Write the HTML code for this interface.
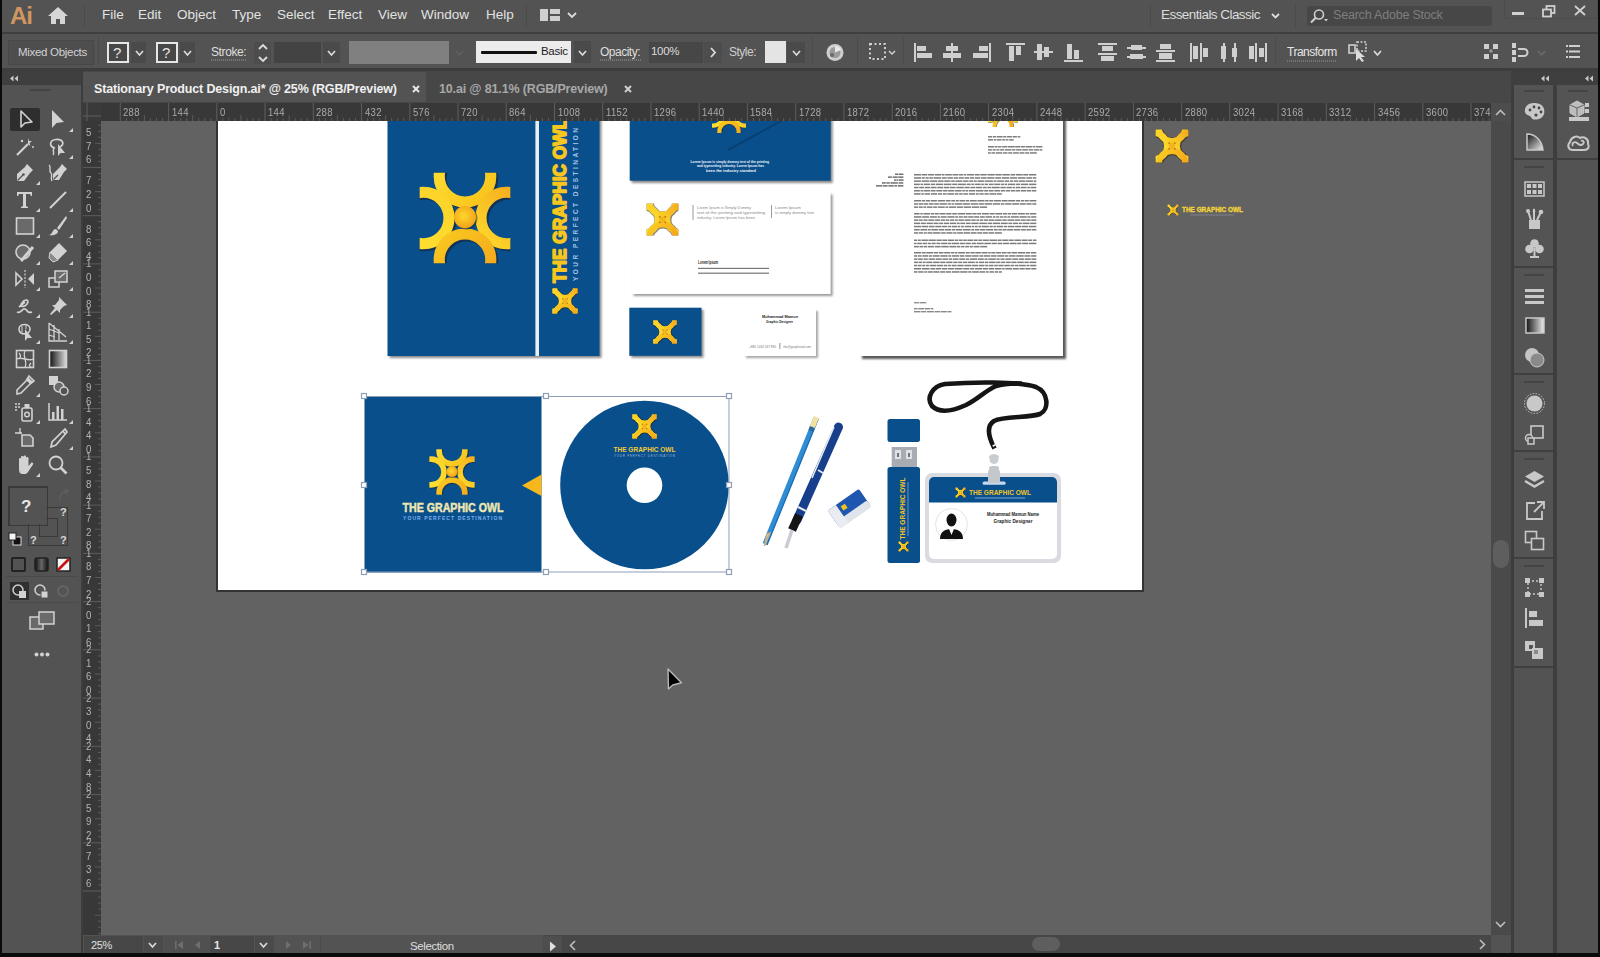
<!DOCTYPE html><html><head><meta charset="utf-8"><style>
*{margin:0;padding:0;box-sizing:border-box}
html,body{width:1600px;height:957px;overflow:hidden;background:#0b0b0b;font-family:"Liberation Sans",sans-serif}
.a{position:absolute}
.t{position:absolute;white-space:nowrap;line-height:1}
svg{position:absolute;overflow:visible}
</style></head><body><div class="a" style="left:2px;top:0px;width:1596px;height:32px;background:#535353;"></div>
<div class="a" style="left:2px;top:32px;width:1596px;height:2px;background:#3f3f3f;"></div>
<div class="a" style="left:2px;top:34px;width:1596px;height:35px;background:#535353;"></div>
<div class="a" style="left:2px;top:68px;width:1596px;height:3px;background:#3d3d3d;"></div>
<div class="a" style="left:2px;top:71px;width:1596px;height:32px;background:#474747;"></div>
<div class="a" style="left:2px;top:71px;width:79px;height:14px;background:#3f3f3f;"></div>
<div class="a" style="left:2px;top:85px;width:79px;height:868px;background:#535353;"></div>
<div class="a" style="left:81px;top:71px;width:2px;height:882px;background:#3d3d3d;"></div>
<div class="a" style="left:1511px;top:71px;width:87px;height:14px;background:#3f3f3f;"></div>
<div class="a" style="left:1511px;top:85px;width:3px;height:868px;background:#3d3d3d;"></div>
<div class="a" style="left:1514px;top:85px;width:39px;height:868px;background:#535353;"></div>
<div class="a" style="left:1553px;top:85px;width:4px;height:868px;background:#3e3e3e;"></div>
<div class="a" style="left:1557px;top:85px;width:41px;height:868px;background:#535353;"></div>
<div class="a" style="left:83px;top:72px;width:343px;height:30px;background:#535353;"></div>
<div class="a" style="left:83px;top:103px;width:1408px;height:18px;background:#383838;"></div>
<div class="a" style="left:83px;top:121px;width:18px;height:814px;background:#383838;"></div>
<div class="a" style="left:101px;top:121px;width:1390px;height:814px;background:#626262;"></div>
<div class="a" style="left:1491px;top:103px;width:20px;height:832px;background:#4a4a4a;"></div>
<div class="a" style="left:83px;top:935px;width:1428px;height:18px;background:#535353;"></div>
<div class="a" style="left:543px;top:935px;width:948px;height:18px;background:#474747;"></div>
<div class="a" style="left:216px;top:121px;width:928px;height:471px;background:#343434;"></div>
<div class="a" style="left:218px;top:121px;width:924px;height:469px;background:#ffffff;"></div>
<div class="t" style="left:10px;top:4px;font-size:24px;color:#cf9660;font-weight:bold;letter-spacing:-1px">Ai</div>
<svg style="left:48px;top:7px;" width="20" height="17" viewBox="0 0 20 17"><path d="M10 0 L20 9 L17 9 L17 17 L12 17 L12 12 L8 12 L8 17 L3 17 L3 9 L0 9 Z" fill="#d6d6d6"/></svg>
<div class="a" style="left:84px;top:5px;width:1px;height:22px;background:#4a4a4a;"></div>
<div class="t" style="left:102px;top:8px;font-size:13.5px;color:#e2e2e2;">File</div>
<div class="t" style="left:138px;top:8px;font-size:13.5px;color:#e2e2e2;">Edit</div>
<div class="t" style="left:177px;top:8px;font-size:13.5px;color:#e2e2e2;">Object</div>
<div class="t" style="left:232px;top:8px;font-size:13.5px;color:#e2e2e2;">Type</div>
<div class="t" style="left:277px;top:8px;font-size:13.5px;color:#e2e2e2;">Select</div>
<div class="t" style="left:328px;top:8px;font-size:13.5px;color:#e2e2e2;">Effect</div>
<div class="t" style="left:378px;top:8px;font-size:13.5px;color:#e2e2e2;">View</div>
<div class="t" style="left:421px;top:8px;font-size:13.5px;color:#e2e2e2;">Window</div>
<div class="t" style="left:486px;top:8px;font-size:13.5px;color:#e2e2e2;">Help</div>
<div class="a" style="left:526px;top:5px;width:1px;height:22px;background:#4a4a4a;"></div>
<svg style="left:540px;top:9px;" width="20" height="12" viewBox="0 0 20 12"><rect x="0" y="0" width="8" height="12" fill="#cfcfcf"/><rect x="10" y="0" width="10" height="5" fill="#cfcfcf"/><rect x="10" y="7" width="10" height="5" fill="#cfcfcf"/></svg>
<svg style="left:567px;top:12px;" width="10" height="6" viewBox="0 0 10 6"><path d="M1 1 L5 5 L9 1" stroke="#dcdcdc" stroke-width="1.8" fill="none"/></svg>
<div class="a" style="left:1150px;top:5px;width:1px;height:22px;background:#4a4a4a;"></div>
<div class="t" style="left:1161px;top:8px;font-size:13.5px;color:#dcdcdc;letter-spacing:-0.55px">Essentials Classic</div>
<svg style="left:1271px;top:13px;" width="9" height="6" viewBox="0 0 9 6"><path d="M1 1 L4.5 4.5 L8 1" stroke="#dcdcdc" stroke-width="1.8" fill="none"/></svg>
<div class="a" style="left:1295px;top:5px;width:1px;height:22px;background:#4a4a4a;"></div>
<div class="a" style="left:1307px;top:6px;width:185px;height:20px;background:#474747;border-radius:3px"></div>
<svg style="left:1310px;top:9px;" width="18" height="14" viewBox="0 0 18 14"><circle cx="9" cy="5.5" r="4.5" stroke="#cfcfcf" stroke-width="1.6" fill="none"/><path d="M5.8 8.8 L1 13.5" stroke="#cfcfcf" stroke-width="2"/><path d="M14 10 L18 10 L16 12.5 Z" fill="#cfcfcf"/></svg>
<div class="t" style="left:1333px;top:9px;font-size:12.5px;color:#7e7e7e;letter-spacing:-0.2px">Search Adobe Stock</div>
<div class="a" style="left:1504px;top:-1px;width:94px;height:20px;background:transparent;border:1px solid #4c4c4c"></div>
<div class="a" style="left:1512px;top:12px;width:12px;height:3px;background:#d0d0d0;"></div>
<svg style="left:1542px;top:5px;" width="14" height="12" viewBox="0 0 14 12"><rect x="4.5" y="1" width="8" height="7" stroke="#d0d0d0" stroke-width="1.8" fill="none"/><rect x="1" y="4.5" width="8" height="7" stroke="#d0d0d0" stroke-width="1.8" fill="#535353"/></svg>
<svg style="left:1574px;top:5px;" width="12" height="11" viewBox="0 0 12 11"><path d="M1 1 L11 10 M11 1 L1 10" stroke="#d0d0d0" stroke-width="1.8"/></svg>
<div class="a" style="left:8px;top:40px;width:86px;height:25px;background:#4e4e4e;border:1px solid #484848"></div>
<div class="t" style="left:18px;top:47px;font-size:11.5px;color:#d2d2d2;letter-spacing:-0.3px">Mixed Objects</div>
<div class="a" style="left:98px;top:37px;width:1px;height:28px;background:#4a4a4a;"></div>
<div class="a" style="left:107px;top:42px;width:22px;height:21px;background:#474747;border:2px solid #e6e6e6"></div>
<div class="t" style="left:113px;top:45px;font-size:15px;color:#e6e6e6;">?</div>
<div class="a" style="left:131px;top:42px;width:15px;height:21px;background:#4a4a4a;"></div>
<svg style="left:135px;top:50px;" width="9" height="6" viewBox="0 0 9 6"><path d="M1 1 L4.5 5 L8 1" stroke="#d8d8d8" stroke-width="1.8" fill="none"/></svg>
<div class="a" style="left:156px;top:42px;width:22px;height:21px;background:#474747;border:2px solid #e6e6e6"></div>
<div class="t" style="left:162px;top:45px;font-size:15px;color:#e6e6e6;">?</div>
<div class="a" style="left:180px;top:42px;width:15px;height:21px;background:#4a4a4a;"></div>
<svg style="left:183px;top:50px;" width="9" height="6" viewBox="0 0 9 6"><path d="M1 1 L4.5 5 L8 1" stroke="#d8d8d8" stroke-width="1.8" fill="none"/></svg>
<div class="t" style="left:211px;top:46px;font-size:12px;color:#dedede;letter-spacing:-0.4px">Stroke:</div>
<svg style="left:211px;top:59px;" width="35" height="2" viewBox="0 0 35 2"><path d="M0 1 H35" stroke="#9a9a9a" stroke-width="1" stroke-dasharray="1 1"/></svg>
<div class="a" style="left:254px;top:42px;width:17px;height:22px;background:#4d4d4d;"></div>
<svg style="left:258px;top:43px;" width="10" height="20" viewBox="0 0 10 20"><path d="M1 6 L5 2 L9 6 M1 14 L5 18 L9 14" stroke="#dcdcdc" stroke-width="1.8" fill="none"/></svg>
<div class="a" style="left:274px;top:42px;width:47px;height:21px;background:#434343;"></div>
<div class="a" style="left:323px;top:42px;width:17px;height:21px;background:#4a4a4a;"></div>
<svg style="left:327px;top:50px;" width="9" height="6" viewBox="0 0 9 6"><path d="M1 1 L4.5 5 L8 1" stroke="#d8d8d8" stroke-width="1.8" fill="none"/></svg>
<div class="a" style="left:349px;top:41px;width:100px;height:23px;background:#808080;"></div>
<svg style="left:455px;top:50px;" width="9" height="6" viewBox="0 0 9 6"><path d="M1 1 L4.5 5 L8 1" stroke="#606060" stroke-width="1.8" fill="none"/></svg>
<div class="a" style="left:476px;top:41px;width:95px;height:22px;background:#ececec;"></div>
<div class="a" style="left:481px;top:51px;width:56px;height:3px;background:#111111;border-radius:1px"></div>
<div class="t" style="left:541px;top:46px;font-size:11.5px;color:#222;letter-spacing:-0.3px">Basic</div>
<div class="a" style="left:574px;top:41px;width:17px;height:22px;background:#4a4a4a;"></div>
<svg style="left:578px;top:50px;" width="9" height="6" viewBox="0 0 9 6"><path d="M1 1 L4.5 5 L8 1" stroke="#d8d8d8" stroke-width="1.8" fill="none"/></svg>
<div class="t" style="left:600px;top:46px;font-size:12px;color:#dedede;letter-spacing:-0.5px">Opacity:</div>
<svg style="left:600px;top:59px;" width="41" height="2" viewBox="0 0 41 2"><path d="M0 1 H41" stroke="#9a9a9a" stroke-width="1" stroke-dasharray="1 1"/></svg>
<div class="a" style="left:649px;top:42px;width:54px;height:21px;background:#474747;"></div>
<div class="t" style="left:651px;top:46px;font-size:11.5px;color:#dcdcdc;letter-spacing:-0.3px">100%</div>
<div class="a" style="left:704px;top:42px;width:18px;height:21px;background:#4d4d4d;"></div>
<svg style="left:710px;top:47px;" width="6" height="11" viewBox="0 0 6 11"><path d="M1 1 L5 5.5 L1 10" stroke="#dcdcdc" stroke-width="1.8" fill="none"/></svg>
<div class="t" style="left:729px;top:46px;font-size:12px;color:#cfcfcf;letter-spacing:-0.5px">Style:</div>
<div class="a" style="left:765px;top:41px;width:21px;height:22px;background:#e4e4e4;"></div>
<div class="a" style="left:787px;top:42px;width:18px;height:21px;background:#4a4a4a;"></div>
<svg style="left:792px;top:50px;" width="9" height="6" viewBox="0 0 9 6"><path d="M1 1 L4.5 5 L8 1" stroke="#d8d8d8" stroke-width="1.8" fill="none"/></svg>
<div class="a" style="left:812px;top:37px;width:1px;height:28px;background:#4b4b4b;"></div>
<svg style="left:825px;top:44px;" width="20" height="17" viewBox="0 0 20 17"><circle cx="10" cy="8.5" r="8.5" fill="#cfcfcf"/><circle cx="10" cy="8.5" r="5.5" fill="#9a9a9a"/><path d="M10 8.5 L10 2 A6.5 6.5 0 0 1 16 6Z" fill="#e8e8e8"/><circle cx="7" cy="11" r="2" fill="#6a6a6a"/></svg>
<div class="a" style="left:857px;top:37px;width:1px;height:28px;background:#4b4b4b;"></div>
<svg style="left:869px;top:43px;" width="27" height="18" viewBox="0 0 27 18"><rect x="1" y="1" width="15" height="15" stroke="#cfcfcf" stroke-width="2" stroke-dasharray="2 2.5" fill="none"/><path d="M20 8 L23 11 L26 8" stroke="#cfcfcf" stroke-width="1.5" fill="none"/></svg>
<div class="a" style="left:903px;top:37px;width:1px;height:28px;background:#4b4b4b;"></div>
<svg style="left:914px;top:43px;" width="19" height="19" viewBox="0 0 19 19"><rect x="0" y="0" width="2" height="19" fill="#cfcfcf"/><rect x="3" y="3" width="9" height="5" fill="#cfcfcf"/><rect x="3" y="10" width="15" height="5" fill="#cfcfcf"/></svg>
<svg style="left:943px;top:43px;" width="19" height="19" viewBox="0 0 19 19"><rect x="8" y="0" width="2" height="19" fill="#cfcfcf"/><rect x="3" y="3" width="12" height="5" fill="#cfcfcf"/><rect x="0" y="10" width="18" height="5" fill="#cfcfcf"/></svg>
<svg style="left:973px;top:43px;" width="19" height="19" viewBox="0 0 19 19"><rect x="16" y="0" width="2" height="19" fill="#cfcfcf"/><rect x="6" y="3" width="9" height="5" fill="#cfcfcf"/><rect x="0" y="10" width="15" height="5" fill="#cfcfcf"/></svg>
<svg style="left:1006px;top:43px;" width="19" height="19" viewBox="0 0 19 19"><rect x="0" y="0" width="19" height="2" fill="#cfcfcf"/><rect x="3" y="3" width="5" height="15" fill="#cfcfcf"/><rect x="10" y="3" width="5" height="9" fill="#cfcfcf"/></svg>
<svg style="left:1034px;top:43px;" width="19" height="19" viewBox="0 0 19 19"><rect x="0" y="8" width="19" height="2" fill="#cfcfcf"/><rect x="3" y="1" width="5" height="16" fill="#cfcfcf"/><rect x="10" y="4" width="5" height="10" fill="#cfcfcf"/></svg>
<svg style="left:1064px;top:43px;" width="19" height="19" viewBox="0 0 19 19"><rect x="0" y="17" width="19" height="2" fill="#cfcfcf"/><rect x="3" y="1" width="5" height="15" fill="#cfcfcf"/><rect x="10" y="7" width="5" height="9" fill="#cfcfcf"/></svg>
<svg style="left:1098px;top:43px;" width="19" height="19" viewBox="0 0 19 19"><rect x="0" y="0" width="19" height="2" fill="#cfcfcf"/><rect x="4" y="3" width="11" height="5" fill="#cfcfcf"/><rect x="0" y="10" width="19" height="2" fill="#cfcfcf"/><rect x="3" y="13" width="13" height="5" fill="#cfcfcf"/></svg>
<svg style="left:1127px;top:43px;" width="19" height="19" viewBox="0 0 19 19"><rect x="0" y="4" width="19" height="2" fill="#cfcfcf"/><rect x="4" y="2" width="11" height="5" fill="#cfcfcf"/><rect x="0" y="13" width="19" height="2" fill="#cfcfcf"/><rect x="3" y="11" width="13" height="5" fill="#cfcfcf"/></svg>
<svg style="left:1156px;top:43px;" width="19" height="19" viewBox="0 0 19 19"><rect x="4" y="1" width="11" height="5" fill="#cfcfcf"/><rect x="0" y="7" width="19" height="2" fill="#cfcfcf"/><rect x="3" y="10" width="13" height="6" fill="#cfcfcf"/><rect x="0" y="17" width="19" height="2" fill="#cfcfcf"/></svg>
<svg style="left:1190px;top:43px;" width="19" height="19" viewBox="0 0 19 19"><rect x="0" y="0" width="2" height="19" fill="#cfcfcf"/><rect x="3" y="3" width="5" height="13" fill="#cfcfcf"/><rect x="10" y="0" width="2" height="19" fill="#cfcfcf"/><rect x="13" y="5" width="5" height="9" fill="#cfcfcf"/></svg>
<svg style="left:1220px;top:43px;" width="19" height="19" viewBox="0 0 19 19"><rect x="3" y="0" width="2" height="19" fill="#cfcfcf"/><rect x="1" y="3" width="5" height="13" fill="#cfcfcf"/><rect x="14" y="0" width="2" height="19" fill="#cfcfcf"/><rect x="12" y="5" width="5" height="9" fill="#cfcfcf"/></svg>
<svg style="left:1248px;top:43px;" width="19" height="19" viewBox="0 0 19 19"><rect x="1" y="3" width="5" height="13" fill="#cfcfcf"/><rect x="7" y="0" width="2" height="19" fill="#cfcfcf"/><rect x="11" y="5" width="5" height="9" fill="#cfcfcf"/><rect x="17" y="0" width="2" height="19" fill="#cfcfcf"/></svg>
<div class="a" style="left:1275px;top:37px;width:1px;height:28px;background:#4b4b4b;"></div>
<div class="t" style="left:1287px;top:46px;font-size:12px;color:#e6e6e6;letter-spacing:-0.5px">Transform</div>
<svg style="left:1287px;top:60px;" width="49" height="2" viewBox="0 0 49 2"><path d="M0 1 H49" stroke="#9a9a9a" stroke-width="1" stroke-dasharray="1 1"/></svg>
<svg style="left:1348px;top:41px;" width="20" height="21" viewBox="0 0 20 21"><rect x="1" y="4" width="6" height="8" stroke="#cfcfcf" stroke-width="1.6" fill="none"/><rect x="9" y="1" width="9" height="9" stroke="#cfcfcf" stroke-width="1.6" fill="none" stroke-dasharray="2 1.5"/><path d="M8 8 L8 20 L11 17 L14 21 L16 20 L13 16 L17 16 Z" fill="#dcdcdc"/></svg>
<svg style="left:1373px;top:50px;" width="9" height="6" viewBox="0 0 9 6"><path d="M1 1 L4.5 5 L8 1" stroke="#d8d8d8" stroke-width="1.8" fill="none"/></svg>
<svg style="left:1484px;top:44px;" width="14" height="16" viewBox="0 0 14 16"><rect x="0" y="0" width="5" height="5" fill="#cfcfcf"/><rect x="9" y="0" width="5" height="5" fill="#cfcfcf"/><rect x="0" y="10" width="5" height="5" fill="#cfcfcf"/><rect x="9" y="10" width="5" height="5" fill="#cfcfcf"/><rect x="5.5" y="5.5" width="3" height="3" fill="#9a9a9a"/></svg>
<svg style="left:1512px;top:43px;" width="17" height="19" viewBox="0 0 17 19"><rect x="0" y="0" width="4" height="5" fill="#cfcfcf"/><rect x="0" y="7" width="4" height="5" fill="#cfcfcf"/><rect x="0" y="14" width="4" height="5" fill="#cfcfcf"/><path d="M6 6 H12 A3.5 3.5 0 0 1 12 13 H6" stroke="#cfcfcf" stroke-width="2" fill="none"/></svg>
<svg style="left:1537px;top:50px;" width="9" height="6" viewBox="0 0 9 6"><path d="M1 1 L4.5 5 L8 1" stroke="#6a6a6a" stroke-width="1.8" fill="none"/></svg>
<svg style="left:1566px;top:45px;" width="14" height="13" viewBox="0 0 14 13"><rect x="0" y="0" width="2" height="2" fill="#cfcfcf"/><rect x="3" y="0" width="11" height="2" fill="#cfcfcf"/><rect x="0" y="5.5" width="2" height="2" fill="#cfcfcf"/><rect x="3" y="5.5" width="11" height="2" fill="#cfcfcf"/><rect x="0" y="11" width="2" height="2" fill="#cfcfcf"/><rect x="3" y="11" width="11" height="2" fill="#cfcfcf"/></svg>
<svg style="left:9px;top:75px;" width="10" height="7" viewBox="0 0 10 7"><path d="M1 3.5 L4.5 0.5 V6.5 Z M5.5 3.5 L9 0.5 V6.5 Z" fill="#c8c8c8"/></svg>
<div class="a" style="left:30px;top:89px;width:21px;height:2px;background:#444444;"></div>
<div class="t" style="left:94px;top:83px;font-size:12.5px;color:#f0f0f0;font-weight:bold;letter-spacing:-0.15px">Stationary Product Design.ai* @ 25% (RGB/Preview)</div>
<svg style="left:412px;top:85px;" width="8" height="8" viewBox="0 0 8 8"><path d="M1 1 L7 7 M7 1 L1 7" stroke="#e8e8e8" stroke-width="2"/></svg>
<div class="t" style="left:439px;top:83px;font-size:12.5px;color:#a8a8a8;font-weight:bold;letter-spacing:-0.15px">10.ai @ 81.1% (RGB/Preview)</div>
<svg style="left:624px;top:85px;" width="8" height="8" viewBox="0 0 8 8"><path d="M1 1 L7 7 M7 1 L1 7" stroke="#cfcfcf" stroke-width="2"/></svg>
<svg style="left:1540px;top:75px;" width="10" height="7" viewBox="0 0 10 7"><path d="M1 3.5 L4.5 0.5 V6.5 Z M5.5 3.5 L9 0.5 V6.5 Z" fill="#c8c8c8"/></svg>
<svg style="left:1584px;top:75px;" width="10" height="7" viewBox="0 0 10 7"><path d="M1 3.5 L4.5 0.5 V6.5 Z M5.5 3.5 L9 0.5 V6.5 Z" fill="#c8c8c8"/></svg>
<svg style="left:101px;top:103px;" width="1390" height="18" viewBox="0 0 1390 18"><rect x="18.8" y="0" width="1" height="18" fill="#5e5e5e"/><rect x="24.9" y="15" width="1" height="3" fill="#5a5a5a"/><rect x="30.9" y="15" width="1" height="3" fill="#5a5a5a"/><rect x="36.9" y="15" width="1" height="3" fill="#5a5a5a"/><rect x="42.9" y="12" width="1" height="6" fill="#5a5a5a"/><rect x="49.0" y="15" width="1" height="3" fill="#5a5a5a"/><rect x="55.0" y="15" width="1" height="3" fill="#5a5a5a"/><rect x="61.0" y="15" width="1" height="3" fill="#5a5a5a"/><rect x="67.1" y="0" width="1" height="18" fill="#5e5e5e"/><rect x="73.1" y="15" width="1" height="3" fill="#5a5a5a"/><rect x="79.1" y="15" width="1" height="3" fill="#5a5a5a"/><rect x="85.2" y="15" width="1" height="3" fill="#5a5a5a"/><rect x="91.2" y="12" width="1" height="6" fill="#5a5a5a"/><rect x="97.2" y="15" width="1" height="3" fill="#5a5a5a"/><rect x="103.2" y="15" width="1" height="3" fill="#5a5a5a"/><rect x="109.3" y="15" width="1" height="3" fill="#5a5a5a"/><rect x="115.3" y="0" width="1" height="18" fill="#5e5e5e"/><rect x="121.3" y="15" width="1" height="3" fill="#5a5a5a"/><rect x="127.4" y="15" width="1" height="3" fill="#5a5a5a"/><rect x="133.4" y="15" width="1" height="3" fill="#5a5a5a"/><rect x="139.4" y="12" width="1" height="6" fill="#5a5a5a"/><rect x="145.5" y="15" width="1" height="3" fill="#5a5a5a"/><rect x="151.5" y="15" width="1" height="3" fill="#5a5a5a"/><rect x="157.5" y="15" width="1" height="3" fill="#5a5a5a"/><rect x="163.5" y="0" width="1" height="18" fill="#5e5e5e"/><rect x="169.6" y="15" width="1" height="3" fill="#5a5a5a"/><rect x="175.6" y="15" width="1" height="3" fill="#5a5a5a"/><rect x="181.6" y="15" width="1" height="3" fill="#5a5a5a"/><rect x="187.7" y="12" width="1" height="6" fill="#5a5a5a"/><rect x="193.7" y="15" width="1" height="3" fill="#5a5a5a"/><rect x="199.7" y="15" width="1" height="3" fill="#5a5a5a"/><rect x="205.8" y="15" width="1" height="3" fill="#5a5a5a"/><rect x="211.8" y="0" width="1" height="18" fill="#5e5e5e"/><rect x="217.8" y="15" width="1" height="3" fill="#5a5a5a"/><rect x="223.8" y="15" width="1" height="3" fill="#5a5a5a"/><rect x="229.9" y="15" width="1" height="3" fill="#5a5a5a"/><rect x="235.9" y="12" width="1" height="6" fill="#5a5a5a"/><rect x="241.9" y="15" width="1" height="3" fill="#5a5a5a"/><rect x="248.0" y="15" width="1" height="3" fill="#5a5a5a"/><rect x="254.0" y="15" width="1" height="3" fill="#5a5a5a"/><rect x="260.0" y="0" width="1" height="18" fill="#5e5e5e"/><rect x="266.0" y="15" width="1" height="3" fill="#5a5a5a"/><rect x="272.1" y="15" width="1" height="3" fill="#5a5a5a"/><rect x="278.1" y="15" width="1" height="3" fill="#5a5a5a"/><rect x="284.1" y="12" width="1" height="6" fill="#5a5a5a"/><rect x="290.2" y="15" width="1" height="3" fill="#5a5a5a"/><rect x="296.2" y="15" width="1" height="3" fill="#5a5a5a"/><rect x="302.2" y="15" width="1" height="3" fill="#5a5a5a"/><rect x="308.3" y="0" width="1" height="18" fill="#5e5e5e"/><rect x="314.3" y="15" width="1" height="3" fill="#5a5a5a"/><rect x="320.3" y="15" width="1" height="3" fill="#5a5a5a"/><rect x="326.3" y="15" width="1" height="3" fill="#5a5a5a"/><rect x="332.4" y="12" width="1" height="6" fill="#5a5a5a"/><rect x="338.4" y="15" width="1" height="3" fill="#5a5a5a"/><rect x="344.4" y="15" width="1" height="3" fill="#5a5a5a"/><rect x="350.5" y="15" width="1" height="3" fill="#5a5a5a"/><rect x="356.5" y="0" width="1" height="18" fill="#5e5e5e"/><rect x="362.5" y="15" width="1" height="3" fill="#5a5a5a"/><rect x="368.6" y="15" width="1" height="3" fill="#5a5a5a"/><rect x="374.6" y="15" width="1" height="3" fill="#5a5a5a"/><rect x="380.6" y="12" width="1" height="6" fill="#5a5a5a"/><rect x="386.6" y="15" width="1" height="3" fill="#5a5a5a"/><rect x="392.7" y="15" width="1" height="3" fill="#5a5a5a"/><rect x="398.7" y="15" width="1" height="3" fill="#5a5a5a"/><rect x="404.7" y="0" width="1" height="18" fill="#5e5e5e"/><rect x="410.8" y="15" width="1" height="3" fill="#5a5a5a"/><rect x="416.8" y="15" width="1" height="3" fill="#5a5a5a"/><rect x="422.8" y="15" width="1" height="3" fill="#5a5a5a"/><rect x="428.9" y="12" width="1" height="6" fill="#5a5a5a"/><rect x="434.9" y="15" width="1" height="3" fill="#5a5a5a"/><rect x="440.9" y="15" width="1" height="3" fill="#5a5a5a"/><rect x="447.0" y="15" width="1" height="3" fill="#5a5a5a"/><rect x="453.0" y="0" width="1" height="18" fill="#5e5e5e"/><rect x="459.0" y="15" width="1" height="3" fill="#5a5a5a"/><rect x="465.0" y="15" width="1" height="3" fill="#5a5a5a"/><rect x="471.1" y="15" width="1" height="3" fill="#5a5a5a"/><rect x="477.1" y="12" width="1" height="6" fill="#5a5a5a"/><rect x="483.1" y="15" width="1" height="3" fill="#5a5a5a"/><rect x="489.2" y="15" width="1" height="3" fill="#5a5a5a"/><rect x="495.2" y="15" width="1" height="3" fill="#5a5a5a"/><rect x="501.2" y="0" width="1" height="18" fill="#5e5e5e"/><rect x="507.2" y="15" width="1" height="3" fill="#5a5a5a"/><rect x="513.3" y="15" width="1" height="3" fill="#5a5a5a"/><rect x="519.3" y="15" width="1" height="3" fill="#5a5a5a"/><rect x="525.3" y="12" width="1" height="6" fill="#5a5a5a"/><rect x="531.4" y="15" width="1" height="3" fill="#5a5a5a"/><rect x="537.4" y="15" width="1" height="3" fill="#5a5a5a"/><rect x="543.4" y="15" width="1" height="3" fill="#5a5a5a"/><rect x="549.5" y="0" width="1" height="18" fill="#5e5e5e"/><rect x="555.5" y="15" width="1" height="3" fill="#5a5a5a"/><rect x="561.5" y="15" width="1" height="3" fill="#5a5a5a"/><rect x="567.6" y="15" width="1" height="3" fill="#5a5a5a"/><rect x="573.6" y="12" width="1" height="6" fill="#5a5a5a"/><rect x="579.6" y="15" width="1" height="3" fill="#5a5a5a"/><rect x="585.6" y="15" width="1" height="3" fill="#5a5a5a"/><rect x="591.7" y="15" width="1" height="3" fill="#5a5a5a"/><rect x="597.7" y="0" width="1" height="18" fill="#5e5e5e"/><rect x="603.7" y="15" width="1" height="3" fill="#5a5a5a"/><rect x="609.8" y="15" width="1" height="3" fill="#5a5a5a"/><rect x="615.8" y="15" width="1" height="3" fill="#5a5a5a"/><rect x="621.8" y="12" width="1" height="6" fill="#5a5a5a"/><rect x="627.9" y="15" width="1" height="3" fill="#5a5a5a"/><rect x="633.9" y="15" width="1" height="3" fill="#5a5a5a"/><rect x="639.9" y="15" width="1" height="3" fill="#5a5a5a"/><rect x="645.9" y="0" width="1" height="18" fill="#5e5e5e"/><rect x="652.0" y="15" width="1" height="3" fill="#5a5a5a"/><rect x="658.0" y="15" width="1" height="3" fill="#5a5a5a"/><rect x="664.0" y="15" width="1" height="3" fill="#5a5a5a"/><rect x="670.1" y="12" width="1" height="6" fill="#5a5a5a"/><rect x="676.1" y="15" width="1" height="3" fill="#5a5a5a"/><rect x="682.1" y="15" width="1" height="3" fill="#5a5a5a"/><rect x="688.2" y="15" width="1" height="3" fill="#5a5a5a"/><rect x="694.2" y="0" width="1" height="18" fill="#5e5e5e"/><rect x="700.2" y="15" width="1" height="3" fill="#5a5a5a"/><rect x="706.2" y="15" width="1" height="3" fill="#5a5a5a"/><rect x="712.3" y="15" width="1" height="3" fill="#5a5a5a"/><rect x="718.3" y="12" width="1" height="6" fill="#5a5a5a"/><rect x="724.3" y="15" width="1" height="3" fill="#5a5a5a"/><rect x="730.4" y="15" width="1" height="3" fill="#5a5a5a"/><rect x="736.4" y="15" width="1" height="3" fill="#5a5a5a"/><rect x="742.4" y="0" width="1" height="18" fill="#5e5e5e"/><rect x="748.5" y="15" width="1" height="3" fill="#5a5a5a"/><rect x="754.5" y="15" width="1" height="3" fill="#5a5a5a"/><rect x="760.5" y="15" width="1" height="3" fill="#5a5a5a"/><rect x="766.5" y="12" width="1" height="6" fill="#5a5a5a"/><rect x="772.6" y="15" width="1" height="3" fill="#5a5a5a"/><rect x="778.6" y="15" width="1" height="3" fill="#5a5a5a"/><rect x="784.6" y="15" width="1" height="3" fill="#5a5a5a"/><rect x="790.7" y="0" width="1" height="18" fill="#5e5e5e"/><rect x="796.7" y="15" width="1" height="3" fill="#5a5a5a"/><rect x="802.7" y="15" width="1" height="3" fill="#5a5a5a"/><rect x="808.8" y="15" width="1" height="3" fill="#5a5a5a"/><rect x="814.8" y="12" width="1" height="6" fill="#5a5a5a"/><rect x="820.8" y="15" width="1" height="3" fill="#5a5a5a"/><rect x="826.8" y="15" width="1" height="3" fill="#5a5a5a"/><rect x="832.9" y="15" width="1" height="3" fill="#5a5a5a"/><rect x="838.9" y="0" width="1" height="18" fill="#5e5e5e"/><rect x="844.9" y="15" width="1" height="3" fill="#5a5a5a"/><rect x="851.0" y="15" width="1" height="3" fill="#5a5a5a"/><rect x="857.0" y="15" width="1" height="3" fill="#5a5a5a"/><rect x="863.0" y="12" width="1" height="6" fill="#5a5a5a"/><rect x="869.1" y="15" width="1" height="3" fill="#5a5a5a"/><rect x="875.1" y="15" width="1" height="3" fill="#5a5a5a"/><rect x="881.1" y="15" width="1" height="3" fill="#5a5a5a"/><rect x="887.1" y="0" width="1" height="18" fill="#5e5e5e"/><rect x="893.2" y="15" width="1" height="3" fill="#5a5a5a"/><rect x="899.2" y="15" width="1" height="3" fill="#5a5a5a"/><rect x="905.2" y="15" width="1" height="3" fill="#5a5a5a"/><rect x="911.3" y="12" width="1" height="6" fill="#5a5a5a"/><rect x="917.3" y="15" width="1" height="3" fill="#5a5a5a"/><rect x="923.3" y="15" width="1" height="3" fill="#5a5a5a"/><rect x="929.4" y="15" width="1" height="3" fill="#5a5a5a"/><rect x="935.4" y="0" width="1" height="18" fill="#5e5e5e"/><rect x="941.4" y="15" width="1" height="3" fill="#5a5a5a"/><rect x="947.4" y="15" width="1" height="3" fill="#5a5a5a"/><rect x="953.5" y="15" width="1" height="3" fill="#5a5a5a"/><rect x="959.5" y="12" width="1" height="6" fill="#5a5a5a"/><rect x="965.5" y="15" width="1" height="3" fill="#5a5a5a"/><rect x="971.6" y="15" width="1" height="3" fill="#5a5a5a"/><rect x="977.6" y="15" width="1" height="3" fill="#5a5a5a"/><rect x="983.6" y="0" width="1" height="18" fill="#5e5e5e"/><rect x="989.7" y="15" width="1" height="3" fill="#5a5a5a"/><rect x="995.7" y="15" width="1" height="3" fill="#5a5a5a"/><rect x="1001.7" y="15" width="1" height="3" fill="#5a5a5a"/><rect x="1007.7" y="12" width="1" height="6" fill="#5a5a5a"/><rect x="1013.8" y="15" width="1" height="3" fill="#5a5a5a"/><rect x="1019.8" y="15" width="1" height="3" fill="#5a5a5a"/><rect x="1025.8" y="15" width="1" height="3" fill="#5a5a5a"/><rect x="1031.9" y="0" width="1" height="18" fill="#5e5e5e"/><rect x="1037.9" y="15" width="1" height="3" fill="#5a5a5a"/><rect x="1043.9" y="15" width="1" height="3" fill="#5a5a5a"/><rect x="1050.0" y="15" width="1" height="3" fill="#5a5a5a"/><rect x="1056.0" y="12" width="1" height="6" fill="#5a5a5a"/><rect x="1062.0" y="15" width="1" height="3" fill="#5a5a5a"/><rect x="1068.0" y="15" width="1" height="3" fill="#5a5a5a"/><rect x="1074.1" y="15" width="1" height="3" fill="#5a5a5a"/><rect x="1080.1" y="0" width="1" height="18" fill="#5e5e5e"/><rect x="1086.1" y="15" width="1" height="3" fill="#5a5a5a"/><rect x="1092.2" y="15" width="1" height="3" fill="#5a5a5a"/><rect x="1098.2" y="15" width="1" height="3" fill="#5a5a5a"/><rect x="1104.2" y="12" width="1" height="6" fill="#5a5a5a"/><rect x="1110.3" y="15" width="1" height="3" fill="#5a5a5a"/><rect x="1116.3" y="15" width="1" height="3" fill="#5a5a5a"/><rect x="1122.3" y="15" width="1" height="3" fill="#5a5a5a"/><rect x="1128.3" y="0" width="1" height="18" fill="#5e5e5e"/><rect x="1134.4" y="15" width="1" height="3" fill="#5a5a5a"/><rect x="1140.4" y="15" width="1" height="3" fill="#5a5a5a"/><rect x="1146.4" y="15" width="1" height="3" fill="#5a5a5a"/><rect x="1152.5" y="12" width="1" height="6" fill="#5a5a5a"/><rect x="1158.5" y="15" width="1" height="3" fill="#5a5a5a"/><rect x="1164.5" y="15" width="1" height="3" fill="#5a5a5a"/><rect x="1170.6" y="15" width="1" height="3" fill="#5a5a5a"/><rect x="1176.6" y="0" width="1" height="18" fill="#5e5e5e"/><rect x="1182.6" y="15" width="1" height="3" fill="#5a5a5a"/><rect x="1188.6" y="15" width="1" height="3" fill="#5a5a5a"/><rect x="1194.7" y="15" width="1" height="3" fill="#5a5a5a"/><rect x="1200.7" y="12" width="1" height="6" fill="#5a5a5a"/><rect x="1206.7" y="15" width="1" height="3" fill="#5a5a5a"/><rect x="1212.8" y="15" width="1" height="3" fill="#5a5a5a"/><rect x="1218.8" y="15" width="1" height="3" fill="#5a5a5a"/><rect x="1224.8" y="0" width="1" height="18" fill="#5e5e5e"/><rect x="1230.8" y="15" width="1" height="3" fill="#5a5a5a"/><rect x="1236.9" y="15" width="1" height="3" fill="#5a5a5a"/><rect x="1242.9" y="15" width="1" height="3" fill="#5a5a5a"/><rect x="1248.9" y="12" width="1" height="6" fill="#5a5a5a"/><rect x="1255.0" y="15" width="1" height="3" fill="#5a5a5a"/><rect x="1261.0" y="15" width="1" height="3" fill="#5a5a5a"/><rect x="1267.0" y="15" width="1" height="3" fill="#5a5a5a"/><rect x="1273.1" y="0" width="1" height="18" fill="#5e5e5e"/><rect x="1279.1" y="15" width="1" height="3" fill="#5a5a5a"/><rect x="1285.1" y="15" width="1" height="3" fill="#5a5a5a"/><rect x="1291.1" y="15" width="1" height="3" fill="#5a5a5a"/><rect x="1297.2" y="12" width="1" height="6" fill="#5a5a5a"/><rect x="1303.2" y="15" width="1" height="3" fill="#5a5a5a"/><rect x="1309.2" y="15" width="1" height="3" fill="#5a5a5a"/><rect x="1315.3" y="15" width="1" height="3" fill="#5a5a5a"/><rect x="1321.3" y="0" width="1" height="18" fill="#5e5e5e"/><rect x="1327.3" y="15" width="1" height="3" fill="#5a5a5a"/><rect x="1333.4" y="15" width="1" height="3" fill="#5a5a5a"/><rect x="1339.4" y="15" width="1" height="3" fill="#5a5a5a"/><rect x="1345.4" y="12" width="1" height="6" fill="#5a5a5a"/><rect x="1351.5" y="15" width="1" height="3" fill="#5a5a5a"/><rect x="1357.5" y="15" width="1" height="3" fill="#5a5a5a"/><rect x="1363.5" y="15" width="1" height="3" fill="#5a5a5a"/><rect x="1369.5" y="0" width="1" height="18" fill="#5e5e5e"/><rect x="1375.6" y="15" width="1" height="3" fill="#5a5a5a"/><rect x="1381.6" y="15" width="1" height="3" fill="#5a5a5a"/><rect x="1387.6" y="15" width="1" height="3" fill="#5a5a5a"/></svg>
<div class="t" style="left:123.3px;top:107px;font-size:10.5px;color:#ababab;letter-spacing:0.4px;transform:scaleX(0.9);transform-origin:0 0">288</div>
<div class="t" style="left:171.6px;top:107px;font-size:10.5px;color:#ababab;letter-spacing:0.4px;transform:scaleX(0.9);transform-origin:0 0">144</div>
<div class="t" style="left:219.8px;top:107px;font-size:10.5px;color:#ababab;letter-spacing:0.4px;transform:scaleX(0.9);transform-origin:0 0">0</div>
<div class="t" style="left:268.0px;top:107px;font-size:10.5px;color:#ababab;letter-spacing:0.4px;transform:scaleX(0.9);transform-origin:0 0">144</div>
<div class="t" style="left:316.3px;top:107px;font-size:10.5px;color:#ababab;letter-spacing:0.4px;transform:scaleX(0.9);transform-origin:0 0">288</div>
<div class="t" style="left:364.5px;top:107px;font-size:10.5px;color:#ababab;letter-spacing:0.4px;transform:scaleX(0.9);transform-origin:0 0">432</div>
<div class="t" style="left:412.8px;top:107px;font-size:10.5px;color:#ababab;letter-spacing:0.4px;transform:scaleX(0.9);transform-origin:0 0">576</div>
<div class="t" style="left:461.0px;top:107px;font-size:10.5px;color:#ababab;letter-spacing:0.4px;transform:scaleX(0.9);transform-origin:0 0">720</div>
<div class="t" style="left:509.2px;top:107px;font-size:10.5px;color:#ababab;letter-spacing:0.4px;transform:scaleX(0.9);transform-origin:0 0">864</div>
<div class="t" style="left:557.5px;top:107px;font-size:10.5px;color:#ababab;letter-spacing:0.4px;transform:scaleX(0.9);transform-origin:0 0">1008</div>
<div class="t" style="left:605.7px;top:107px;font-size:10.5px;color:#ababab;letter-spacing:0.4px;transform:scaleX(0.9);transform-origin:0 0">1152</div>
<div class="t" style="left:654.0px;top:107px;font-size:10.5px;color:#ababab;letter-spacing:0.4px;transform:scaleX(0.9);transform-origin:0 0">1296</div>
<div class="t" style="left:702.2px;top:107px;font-size:10.5px;color:#ababab;letter-spacing:0.4px;transform:scaleX(0.9);transform-origin:0 0">1440</div>
<div class="t" style="left:750.4px;top:107px;font-size:10.5px;color:#ababab;letter-spacing:0.4px;transform:scaleX(0.9);transform-origin:0 0">1584</div>
<div class="t" style="left:798.7px;top:107px;font-size:10.5px;color:#ababab;letter-spacing:0.4px;transform:scaleX(0.9);transform-origin:0 0">1728</div>
<div class="t" style="left:846.9px;top:107px;font-size:10.5px;color:#ababab;letter-spacing:0.4px;transform:scaleX(0.9);transform-origin:0 0">1872</div>
<div class="t" style="left:895.2px;top:107px;font-size:10.5px;color:#ababab;letter-spacing:0.4px;transform:scaleX(0.9);transform-origin:0 0">2016</div>
<div class="t" style="left:943.4px;top:107px;font-size:10.5px;color:#ababab;letter-spacing:0.4px;transform:scaleX(0.9);transform-origin:0 0">2160</div>
<div class="t" style="left:991.6px;top:107px;font-size:10.5px;color:#ababab;letter-spacing:0.4px;transform:scaleX(0.9);transform-origin:0 0">2304</div>
<div class="t" style="left:1039.9px;top:107px;font-size:10.5px;color:#ababab;letter-spacing:0.4px;transform:scaleX(0.9);transform-origin:0 0">2448</div>
<div class="t" style="left:1088.1px;top:107px;font-size:10.5px;color:#ababab;letter-spacing:0.4px;transform:scaleX(0.9);transform-origin:0 0">2592</div>
<div class="t" style="left:1136.4px;top:107px;font-size:10.5px;color:#ababab;letter-spacing:0.4px;transform:scaleX(0.9);transform-origin:0 0">2736</div>
<div class="t" style="left:1184.6px;top:107px;font-size:10.5px;color:#ababab;letter-spacing:0.4px;transform:scaleX(0.9);transform-origin:0 0">2880</div>
<div class="t" style="left:1232.8px;top:107px;font-size:10.5px;color:#ababab;letter-spacing:0.4px;transform:scaleX(0.9);transform-origin:0 0">3024</div>
<div class="t" style="left:1281.1px;top:107px;font-size:10.5px;color:#ababab;letter-spacing:0.4px;transform:scaleX(0.9);transform-origin:0 0">3168</div>
<div class="t" style="left:1329.3px;top:107px;font-size:10.5px;color:#ababab;letter-spacing:0.4px;transform:scaleX(0.9);transform-origin:0 0">3312</div>
<div class="t" style="left:1377.6px;top:107px;font-size:10.5px;color:#ababab;letter-spacing:0.4px;transform:scaleX(0.9);transform-origin:0 0">3456</div>
<div class="t" style="left:1425.8px;top:107px;font-size:10.5px;color:#ababab;letter-spacing:0.4px;transform:scaleX(0.9);transform-origin:0 0">3600</div>
<div class="t" style="left:1474.0px;top:107px;font-size:10.5px;color:#ababab;letter-spacing:0.4px;transform:scaleX(0.9);transform-origin:0 0">374</div>
<div class="a" style="left:1491px;top:103px;width:20px;height:18px;background:#4d4d4d;"></div>
<svg style="left:1495px;top:109px;" width="11" height="7" viewBox="0 0 11 7"><path d="M1 6 L5.5 1.5 L10 6" stroke="#bdbdbd" stroke-width="1.6" fill="none"/></svg>
<div class="a" style="left:83px;top:103px;width:18px;height:18px;background:#3a3a3a;"></div>
<svg style="left:83px;top:103px;" width="18" height="18" viewBox="0 0 18 18"><path d="M4 0 V18 M0 13 H18" stroke="#5e5e5e" stroke-width="1"/></svg>
<svg style="left:83px;top:121px;" width="18" height="814" viewBox="0 0 18 814"><rect x="15" y="3.7" width="3" height="1" fill="#5a5a5a"/><rect x="15" y="9.8" width="3" height="1" fill="#5a5a5a"/><rect x="15" y="15.8" width="3" height="1" fill="#5a5a5a"/><rect x="12" y="21.8" width="6" height="1" fill="#5a5a5a"/><rect x="15" y="27.8" width="3" height="1" fill="#5a5a5a"/><rect x="15" y="33.9" width="3" height="1" fill="#5a5a5a"/><rect x="15" y="39.9" width="3" height="1" fill="#5a5a5a"/><rect x="0" y="45.9" width="18" height="1" fill="#5e5e5e"/><rect x="15" y="52.0" width="3" height="1" fill="#5a5a5a"/><rect x="15" y="58.0" width="3" height="1" fill="#5a5a5a"/><rect x="15" y="64.0" width="3" height="1" fill="#5a5a5a"/><rect x="12" y="70.1" width="6" height="1" fill="#5a5a5a"/><rect x="15" y="76.1" width="3" height="1" fill="#5a5a5a"/><rect x="15" y="82.1" width="3" height="1" fill="#5a5a5a"/><rect x="15" y="88.2" width="3" height="1" fill="#5a5a5a"/><rect x="0" y="94.2" width="18" height="1" fill="#5e5e5e"/><rect x="15" y="100.2" width="3" height="1" fill="#5a5a5a"/><rect x="15" y="106.2" width="3" height="1" fill="#5a5a5a"/><rect x="15" y="112.3" width="3" height="1" fill="#5a5a5a"/><rect x="12" y="118.3" width="6" height="1" fill="#5a5a5a"/><rect x="15" y="124.3" width="3" height="1" fill="#5a5a5a"/><rect x="15" y="130.4" width="3" height="1" fill="#5a5a5a"/><rect x="15" y="136.4" width="3" height="1" fill="#5a5a5a"/><rect x="0" y="142.4" width="18" height="1" fill="#5e5e5e"/><rect x="15" y="148.4" width="3" height="1" fill="#5a5a5a"/><rect x="15" y="154.5" width="3" height="1" fill="#5a5a5a"/><rect x="15" y="160.5" width="3" height="1" fill="#5a5a5a"/><rect x="12" y="166.5" width="6" height="1" fill="#5a5a5a"/><rect x="15" y="172.6" width="3" height="1" fill="#5a5a5a"/><rect x="15" y="178.6" width="3" height="1" fill="#5a5a5a"/><rect x="15" y="184.6" width="3" height="1" fill="#5a5a5a"/><rect x="0" y="190.7" width="18" height="1" fill="#5e5e5e"/><rect x="15" y="196.7" width="3" height="1" fill="#5a5a5a"/><rect x="15" y="202.7" width="3" height="1" fill="#5a5a5a"/><rect x="15" y="208.8" width="3" height="1" fill="#5a5a5a"/><rect x="12" y="214.8" width="6" height="1" fill="#5a5a5a"/><rect x="15" y="220.8" width="3" height="1" fill="#5a5a5a"/><rect x="15" y="226.8" width="3" height="1" fill="#5a5a5a"/><rect x="15" y="232.9" width="3" height="1" fill="#5a5a5a"/><rect x="0" y="238.9" width="18" height="1" fill="#5e5e5e"/><rect x="15" y="244.9" width="3" height="1" fill="#5a5a5a"/><rect x="15" y="251.0" width="3" height="1" fill="#5a5a5a"/><rect x="15" y="257.0" width="3" height="1" fill="#5a5a5a"/><rect x="12" y="263.0" width="6" height="1" fill="#5a5a5a"/><rect x="15" y="269.1" width="3" height="1" fill="#5a5a5a"/><rect x="15" y="275.1" width="3" height="1" fill="#5a5a5a"/><rect x="15" y="281.1" width="3" height="1" fill="#5a5a5a"/><rect x="0" y="287.1" width="18" height="1" fill="#5e5e5e"/><rect x="15" y="293.2" width="3" height="1" fill="#5a5a5a"/><rect x="15" y="299.2" width="3" height="1" fill="#5a5a5a"/><rect x="15" y="305.2" width="3" height="1" fill="#5a5a5a"/><rect x="12" y="311.3" width="6" height="1" fill="#5a5a5a"/><rect x="15" y="317.3" width="3" height="1" fill="#5a5a5a"/><rect x="15" y="323.3" width="3" height="1" fill="#5a5a5a"/><rect x="15" y="329.3" width="3" height="1" fill="#5a5a5a"/><rect x="0" y="335.4" width="18" height="1" fill="#5e5e5e"/><rect x="15" y="341.4" width="3" height="1" fill="#5a5a5a"/><rect x="15" y="347.4" width="3" height="1" fill="#5a5a5a"/><rect x="15" y="353.5" width="3" height="1" fill="#5a5a5a"/><rect x="12" y="359.5" width="6" height="1" fill="#5a5a5a"/><rect x="15" y="365.5" width="3" height="1" fill="#5a5a5a"/><rect x="15" y="371.6" width="3" height="1" fill="#5a5a5a"/><rect x="15" y="377.6" width="3" height="1" fill="#5a5a5a"/><rect x="0" y="383.6" width="18" height="1" fill="#5e5e5e"/><rect x="15" y="389.6" width="3" height="1" fill="#5a5a5a"/><rect x="15" y="395.7" width="3" height="1" fill="#5a5a5a"/><rect x="15" y="401.7" width="3" height="1" fill="#5a5a5a"/><rect x="12" y="407.7" width="6" height="1" fill="#5a5a5a"/><rect x="15" y="413.8" width="3" height="1" fill="#5a5a5a"/><rect x="15" y="419.8" width="3" height="1" fill="#5a5a5a"/><rect x="15" y="425.8" width="3" height="1" fill="#5a5a5a"/><rect x="0" y="431.9" width="18" height="1" fill="#5e5e5e"/><rect x="15" y="437.9" width="3" height="1" fill="#5a5a5a"/><rect x="15" y="443.9" width="3" height="1" fill="#5a5a5a"/><rect x="15" y="450.0" width="3" height="1" fill="#5a5a5a"/><rect x="12" y="456.0" width="6" height="1" fill="#5a5a5a"/><rect x="15" y="462.0" width="3" height="1" fill="#5a5a5a"/><rect x="15" y="468.0" width="3" height="1" fill="#5a5a5a"/><rect x="15" y="474.1" width="3" height="1" fill="#5a5a5a"/><rect x="0" y="480.1" width="18" height="1" fill="#5e5e5e"/><rect x="15" y="486.1" width="3" height="1" fill="#5a5a5a"/><rect x="15" y="492.2" width="3" height="1" fill="#5a5a5a"/><rect x="15" y="498.2" width="3" height="1" fill="#5a5a5a"/><rect x="12" y="504.2" width="6" height="1" fill="#5a5a5a"/><rect x="15" y="510.2" width="3" height="1" fill="#5a5a5a"/><rect x="15" y="516.3" width="3" height="1" fill="#5a5a5a"/><rect x="15" y="522.3" width="3" height="1" fill="#5a5a5a"/><rect x="0" y="528.3" width="18" height="1" fill="#5e5e5e"/><rect x="15" y="534.4" width="3" height="1" fill="#5a5a5a"/><rect x="15" y="540.4" width="3" height="1" fill="#5a5a5a"/><rect x="15" y="546.4" width="3" height="1" fill="#5a5a5a"/><rect x="12" y="552.5" width="6" height="1" fill="#5a5a5a"/><rect x="15" y="558.5" width="3" height="1" fill="#5a5a5a"/><rect x="15" y="564.5" width="3" height="1" fill="#5a5a5a"/><rect x="15" y="570.6" width="3" height="1" fill="#5a5a5a"/><rect x="0" y="576.6" width="18" height="1" fill="#5e5e5e"/><rect x="15" y="582.6" width="3" height="1" fill="#5a5a5a"/><rect x="15" y="588.6" width="3" height="1" fill="#5a5a5a"/><rect x="15" y="594.7" width="3" height="1" fill="#5a5a5a"/><rect x="12" y="600.7" width="6" height="1" fill="#5a5a5a"/><rect x="15" y="606.7" width="3" height="1" fill="#5a5a5a"/><rect x="15" y="612.8" width="3" height="1" fill="#5a5a5a"/><rect x="15" y="618.8" width="3" height="1" fill="#5a5a5a"/><rect x="0" y="624.8" width="18" height="1" fill="#5e5e5e"/><rect x="15" y="630.9" width="3" height="1" fill="#5a5a5a"/><rect x="15" y="636.9" width="3" height="1" fill="#5a5a5a"/><rect x="15" y="642.9" width="3" height="1" fill="#5a5a5a"/><rect x="12" y="648.9" width="6" height="1" fill="#5a5a5a"/><rect x="15" y="655.0" width="3" height="1" fill="#5a5a5a"/><rect x="15" y="661.0" width="3" height="1" fill="#5a5a5a"/><rect x="15" y="667.0" width="3" height="1" fill="#5a5a5a"/><rect x="0" y="673.1" width="18" height="1" fill="#5e5e5e"/><rect x="15" y="679.1" width="3" height="1" fill="#5a5a5a"/><rect x="15" y="685.1" width="3" height="1" fill="#5a5a5a"/><rect x="15" y="691.2" width="3" height="1" fill="#5a5a5a"/><rect x="12" y="697.2" width="6" height="1" fill="#5a5a5a"/><rect x="15" y="703.2" width="3" height="1" fill="#5a5a5a"/><rect x="15" y="709.2" width="3" height="1" fill="#5a5a5a"/><rect x="15" y="715.3" width="3" height="1" fill="#5a5a5a"/><rect x="0" y="721.3" width="18" height="1" fill="#5e5e5e"/><rect x="15" y="727.3" width="3" height="1" fill="#5a5a5a"/><rect x="15" y="733.4" width="3" height="1" fill="#5a5a5a"/><rect x="15" y="739.4" width="3" height="1" fill="#5a5a5a"/><rect x="12" y="745.4" width="6" height="1" fill="#5a5a5a"/><rect x="15" y="751.5" width="3" height="1" fill="#5a5a5a"/><rect x="15" y="757.5" width="3" height="1" fill="#5a5a5a"/><rect x="15" y="763.5" width="3" height="1" fill="#5a5a5a"/><rect x="0" y="769.5" width="18" height="1" fill="#5e5e5e"/><rect x="15" y="775.6" width="3" height="1" fill="#5a5a5a"/><rect x="15" y="781.6" width="3" height="1" fill="#5a5a5a"/><rect x="15" y="787.6" width="3" height="1" fill="#5a5a5a"/><rect x="12" y="793.7" width="6" height="1" fill="#5a5a5a"/><rect x="15" y="799.7" width="3" height="1" fill="#5a5a5a"/><rect x="15" y="805.7" width="3" height="1" fill="#5a5a5a"/><rect x="15" y="811.8" width="3" height="1" fill="#5a5a5a"/></svg>
<div class="t" style="left:86px;top:154.4px;font-size:11px;color:#b4b4b4;transform:scaleX(0.88);transform-origin:0 0">6</div>
<div class="t" style="left:86px;top:140.8px;font-size:11px;color:#b4b4b4;transform:scaleX(0.88);transform-origin:0 0">7</div>
<div class="t" style="left:86px;top:127.2px;font-size:11px;color:#b4b4b4;transform:scaleX(0.88);transform-origin:0 0">5</div>
<div class="t" style="left:86px;top:202.6px;font-size:11px;color:#b4b4b4;transform:scaleX(0.88);transform-origin:0 0">0</div>
<div class="t" style="left:86px;top:189.0px;font-size:11px;color:#b4b4b4;transform:scaleX(0.88);transform-origin:0 0">2</div>
<div class="t" style="left:86px;top:175.4px;font-size:11px;color:#b4b4b4;transform:scaleX(0.88);transform-origin:0 0">7</div>
<div class="t" style="left:86px;top:250.9px;font-size:11px;color:#b4b4b4;transform:scaleX(0.88);transform-origin:0 0">4</div>
<div class="t" style="left:86px;top:237.3px;font-size:11px;color:#b4b4b4;transform:scaleX(0.88);transform-origin:0 0">6</div>
<div class="t" style="left:86px;top:223.7px;font-size:11px;color:#b4b4b4;transform:scaleX(0.88);transform-origin:0 0">8</div>
<div class="t" style="left:86px;top:299.1px;font-size:11px;color:#b4b4b4;transform:scaleX(0.88);transform-origin:0 0">8</div>
<div class="t" style="left:86px;top:285.5px;font-size:11px;color:#b4b4b4;transform:scaleX(0.88);transform-origin:0 0">0</div>
<div class="t" style="left:86px;top:271.9px;font-size:11px;color:#b4b4b4;transform:scaleX(0.88);transform-origin:0 0">0</div>
<div class="t" style="left:86px;top:258.3px;font-size:11px;color:#b4b4b4;transform:scaleX(0.88);transform-origin:0 0">1</div>
<div class="t" style="left:86px;top:347.4px;font-size:11px;color:#b4b4b4;transform:scaleX(0.88);transform-origin:0 0">2</div>
<div class="t" style="left:86px;top:333.8px;font-size:11px;color:#b4b4b4;transform:scaleX(0.88);transform-origin:0 0">5</div>
<div class="t" style="left:86px;top:320.2px;font-size:11px;color:#b4b4b4;transform:scaleX(0.88);transform-origin:0 0">1</div>
<div class="t" style="left:86px;top:306.6px;font-size:11px;color:#b4b4b4;transform:scaleX(0.88);transform-origin:0 0">1</div>
<div class="t" style="left:86px;top:395.6px;font-size:11px;color:#b4b4b4;transform:scaleX(0.88);transform-origin:0 0">6</div>
<div class="t" style="left:86px;top:382.0px;font-size:11px;color:#b4b4b4;transform:scaleX(0.88);transform-origin:0 0">9</div>
<div class="t" style="left:86px;top:368.4px;font-size:11px;color:#b4b4b4;transform:scaleX(0.88);transform-origin:0 0">2</div>
<div class="t" style="left:86px;top:354.8px;font-size:11px;color:#b4b4b4;transform:scaleX(0.88);transform-origin:0 0">1</div>
<div class="t" style="left:86px;top:443.8px;font-size:11px;color:#b4b4b4;transform:scaleX(0.88);transform-origin:0 0">0</div>
<div class="t" style="left:86px;top:430.2px;font-size:11px;color:#b4b4b4;transform:scaleX(0.88);transform-origin:0 0">4</div>
<div class="t" style="left:86px;top:416.6px;font-size:11px;color:#b4b4b4;transform:scaleX(0.88);transform-origin:0 0">4</div>
<div class="t" style="left:86px;top:403.0px;font-size:11px;color:#b4b4b4;transform:scaleX(0.88);transform-origin:0 0">1</div>
<div class="t" style="left:86px;top:492.1px;font-size:11px;color:#b4b4b4;transform:scaleX(0.88);transform-origin:0 0">4</div>
<div class="t" style="left:86px;top:478.5px;font-size:11px;color:#b4b4b4;transform:scaleX(0.88);transform-origin:0 0">8</div>
<div class="t" style="left:86px;top:464.9px;font-size:11px;color:#b4b4b4;transform:scaleX(0.88);transform-origin:0 0">5</div>
<div class="t" style="left:86px;top:451.3px;font-size:11px;color:#b4b4b4;transform:scaleX(0.88);transform-origin:0 0">1</div>
<div class="t" style="left:86px;top:540.3px;font-size:11px;color:#b4b4b4;transform:scaleX(0.88);transform-origin:0 0">8</div>
<div class="t" style="left:86px;top:526.7px;font-size:11px;color:#b4b4b4;transform:scaleX(0.88);transform-origin:0 0">2</div>
<div class="t" style="left:86px;top:513.1px;font-size:11px;color:#b4b4b4;transform:scaleX(0.88);transform-origin:0 0">7</div>
<div class="t" style="left:86px;top:499.5px;font-size:11px;color:#b4b4b4;transform:scaleX(0.88);transform-origin:0 0">1</div>
<div class="t" style="left:86px;top:588.6px;font-size:11px;color:#b4b4b4;transform:scaleX(0.88);transform-origin:0 0">2</div>
<div class="t" style="left:86px;top:575.0px;font-size:11px;color:#b4b4b4;transform:scaleX(0.88);transform-origin:0 0">7</div>
<div class="t" style="left:86px;top:561.4px;font-size:11px;color:#b4b4b4;transform:scaleX(0.88);transform-origin:0 0">8</div>
<div class="t" style="left:86px;top:547.8px;font-size:11px;color:#b4b4b4;transform:scaleX(0.88);transform-origin:0 0">1</div>
<div class="t" style="left:86px;top:636.8px;font-size:11px;color:#b4b4b4;transform:scaleX(0.88);transform-origin:0 0">6</div>
<div class="t" style="left:86px;top:623.2px;font-size:11px;color:#b4b4b4;transform:scaleX(0.88);transform-origin:0 0">1</div>
<div class="t" style="left:86px;top:609.6px;font-size:11px;color:#b4b4b4;transform:scaleX(0.88);transform-origin:0 0">0</div>
<div class="t" style="left:86px;top:596.0px;font-size:11px;color:#b4b4b4;transform:scaleX(0.88);transform-origin:0 0">2</div>
<div class="t" style="left:86px;top:685.0px;font-size:11px;color:#b4b4b4;transform:scaleX(0.88);transform-origin:0 0">0</div>
<div class="t" style="left:86px;top:671.4px;font-size:11px;color:#b4b4b4;transform:scaleX(0.88);transform-origin:0 0">6</div>
<div class="t" style="left:86px;top:657.8px;font-size:11px;color:#b4b4b4;transform:scaleX(0.88);transform-origin:0 0">1</div>
<div class="t" style="left:86px;top:644.2px;font-size:11px;color:#b4b4b4;transform:scaleX(0.88);transform-origin:0 0">2</div>
<div class="t" style="left:86px;top:733.3px;font-size:11px;color:#b4b4b4;transform:scaleX(0.88);transform-origin:0 0">4</div>
<div class="t" style="left:86px;top:719.7px;font-size:11px;color:#b4b4b4;transform:scaleX(0.88);transform-origin:0 0">0</div>
<div class="t" style="left:86px;top:706.1px;font-size:11px;color:#b4b4b4;transform:scaleX(0.88);transform-origin:0 0">3</div>
<div class="t" style="left:86px;top:692.5px;font-size:11px;color:#b4b4b4;transform:scaleX(0.88);transform-origin:0 0">2</div>
<div class="t" style="left:86px;top:781.5px;font-size:11px;color:#b4b4b4;transform:scaleX(0.88);transform-origin:0 0">8</div>
<div class="t" style="left:86px;top:767.9px;font-size:11px;color:#b4b4b4;transform:scaleX(0.88);transform-origin:0 0">4</div>
<div class="t" style="left:86px;top:754.3px;font-size:11px;color:#b4b4b4;transform:scaleX(0.88);transform-origin:0 0">4</div>
<div class="t" style="left:86px;top:740.7px;font-size:11px;color:#b4b4b4;transform:scaleX(0.88);transform-origin:0 0">2</div>
<div class="t" style="left:86px;top:829.8px;font-size:11px;color:#b4b4b4;transform:scaleX(0.88);transform-origin:0 0">2</div>
<div class="t" style="left:86px;top:816.2px;font-size:11px;color:#b4b4b4;transform:scaleX(0.88);transform-origin:0 0">9</div>
<div class="t" style="left:86px;top:802.6px;font-size:11px;color:#b4b4b4;transform:scaleX(0.88);transform-origin:0 0">5</div>
<div class="t" style="left:86px;top:789.0px;font-size:11px;color:#b4b4b4;transform:scaleX(0.88);transform-origin:0 0">2</div>
<div class="t" style="left:86px;top:878.0px;font-size:11px;color:#b4b4b4;transform:scaleX(0.88);transform-origin:0 0">6</div>
<div class="t" style="left:86px;top:864.4px;font-size:11px;color:#b4b4b4;transform:scaleX(0.88);transform-origin:0 0">3</div>
<div class="t" style="left:86px;top:850.8px;font-size:11px;color:#b4b4b4;transform:scaleX(0.88);transform-origin:0 0">7</div>
<div class="t" style="left:86px;top:837.2px;font-size:11px;color:#b4b4b4;transform:scaleX(0.88);transform-origin:0 0">2</div>
<div class="a" style="left:10px;top:108px;width:30px;height:23px;background:#2e2e2e;border-radius:2px"></div>
<svg style="left:13px;top:108px;" width="24" height="24" viewBox="0 0 24 24"><path d="M8 3 L8 19 L12 15 L19 14 Z" stroke="#d2d2d2" stroke-width="1.6" fill="none" stroke-linejoin="round"/></svg>
<svg style="left:46px;top:108px;" width="24" height="24" viewBox="0 0 24 24"><path d="M6 2 L6 20 L10.5 15 L18 14 Z" fill="#d2d2d2"/></svg>
<svg style="left:69px;top:128px;" width="4" height="4" viewBox="0 0 4 4"><path d="M4 0 L4 4 L0 4 Z" fill="#d2d2d2"/></svg>
<svg style="left:13px;top:134.5px;" width="24" height="24" viewBox="0 0 24 24"><path d="M4 20 L15 9" stroke="#d2d2d2" stroke-width="2.2"/><path d="M15 3 L16 6 L19 6 L16.5 8 L17.5 11 L15 9.3" fill="#d2d2d2"/><circle cx="9" cy="6" r="1.2" fill="#d2d2d2"/><circle cx="20" cy="12" r="1" fill="#d2d2d2"/></svg>
<svg style="left:46px;top:134.5px;" width="24" height="24" viewBox="0 0 24 24"><path d="M9 13 C3 12 3 5 10 4.5 C17 4 19 9 14 12" stroke="#d2d2d2" stroke-width="1.7" fill="none"/><path d="M12 9 L12 21 L14.5 18 L19 18 Z" fill="#d2d2d2"/><path d="M8 13 C6 16 9 18 7 20" stroke="#d2d2d2" stroke-width="1.4" fill="none"/></svg>
<svg style="left:69px;top:154.5px;" width="4" height="4" viewBox="0 0 4 4"><path d="M4 0 L4 4 L0 4 Z" fill="#d2d2d2"/></svg>
<svg style="left:13px;top:161px;" width="24" height="24" viewBox="0 0 24 24"><path d="M14 3 L20 9 L17 12 L11 20 L4 20 L4 13 L12 6 Z" fill="#d2d2d2"/><path d="M4.5 19.5 L10 14" stroke="#535353" stroke-width="1.2"/><circle cx="10.5" cy="13.5" r="1.3" fill="#535353"/></svg>
<svg style="left:36px;top:181px;" width="4" height="4" viewBox="0 0 4 4"><path d="M4 0 L4 4 L0 4 Z" fill="#d2d2d2"/></svg>
<svg style="left:46px;top:161px;" width="24" height="24" viewBox="0 0 24 24"><path d="M16 3 L21 8 L18 11 L13 19 L7 19 L7 13 L14 6 Z" fill="#d2d2d2"/><path d="M7.5 18.5 L12 14" stroke="#535353" stroke-width="1.2"/><path d="M3 4 C6 6 2 10 5 12 C7 14 4 17 6 20" stroke="#d2d2d2" stroke-width="1.4" fill="none"/></svg>
<svg style="left:13px;top:187.5px;" width="24" height="24" viewBox="0 0 24 24"><path d="M4 4 H19 V8 H18 L17 6 H13 V18 L15 19 V20 H8 V19 L10 18 V6 H6 L5 8 H4 Z" fill="#d2d2d2"/></svg>
<svg style="left:36px;top:207.5px;" width="4" height="4" viewBox="0 0 4 4"><path d="M4 0 L4 4 L0 4 Z" fill="#d2d2d2"/></svg>
<svg style="left:46px;top:187.5px;" width="24" height="24" viewBox="0 0 24 24"><path d="M4 20 L20 4" stroke="#d2d2d2" stroke-width="2"/></svg>
<svg style="left:69px;top:207.5px;" width="4" height="4" viewBox="0 0 4 4"><path d="M4 0 L4 4 L0 4 Z" fill="#d2d2d2"/></svg>
<svg style="left:13px;top:214px;" width="24" height="24" viewBox="0 0 24 24"><rect x="3.5" y="4" width="17" height="16" stroke="#d2d2d2" stroke-width="1.6" fill="#6a6a6a"/></svg>
<svg style="left:36px;top:234px;" width="4" height="4" viewBox="0 0 4 4"><path d="M4 0 L4 4 L0 4 Z" fill="#d2d2d2"/></svg>
<svg style="left:46px;top:214px;" width="24" height="24" viewBox="0 0 24 24"><path d="M20 2 L11 14 L13 16 L21 4 Z" fill="#d2d2d2"/><path d="M10 15 C6 15 7 20 3 21 C8 22 12 20 12 17 Z" fill="#d2d2d2"/></svg>
<svg style="left:69px;top:234px;" width="4" height="4" viewBox="0 0 4 4"><path d="M4 0 L4 4 L0 4 Z" fill="#d2d2d2"/></svg>
<svg style="left:13px;top:240.5px;" width="24" height="24" viewBox="0 0 24 24"><circle cx="10" cy="11" r="7" stroke="#d2d2d2" stroke-width="1.6" fill="#6a6a6a"/><path d="M8 20 L20 6" stroke="#d2d2d2" stroke-width="3"/></svg>
<svg style="left:36px;top:260.5px;" width="4" height="4" viewBox="0 0 4 4"><path d="M4 0 L4 4 L0 4 Z" fill="#d2d2d2"/></svg>
<svg style="left:46px;top:240.5px;" width="24" height="24" viewBox="0 0 24 24"><path d="M13 2 L21 10 L12 19 L4 11 Z" fill="#d2d2d2"/><path d="M4 11 L8 15 L12 19 L7 21 L3 17 Z" fill="#8a8a8a" stroke="#d2d2d2" stroke-width="1"/></svg>
<svg style="left:69px;top:260.5px;" width="4" height="4" viewBox="0 0 4 4"><path d="M4 0 L4 4 L0 4 Z" fill="#d2d2d2"/></svg>
<svg style="left:13px;top:267px;" width="24" height="24" viewBox="0 0 24 24"><path d="M3 6 L9 12 L3 18 Z" stroke="#d2d2d2" stroke-width="1.6" fill="none"/><path d="M21 6 L15 12 L21 18 Z" fill="#d2d2d2"/><path d="M12 3 V21" stroke="#d2d2d2" stroke-width="1.2" stroke-dasharray="2 1.5"/></svg>
<svg style="left:36px;top:287px;" width="4" height="4" viewBox="0 0 4 4"><path d="M4 0 L4 4 L0 4 Z" fill="#d2d2d2"/></svg>
<svg style="left:46px;top:267px;" width="24" height="24" viewBox="0 0 24 24"><rect x="3" y="11" width="10" height="9" stroke="#d2d2d2" stroke-width="1.5" fill="none"/><rect x="9" y="4" width="12" height="11" stroke="#d2d2d2" stroke-width="1.5" fill="#6a6a6a"/><path d="M13 11 L19 6" stroke="#d2d2d2" stroke-width="1.5"/></svg>
<svg style="left:69px;top:287px;" width="4" height="4" viewBox="0 0 4 4"><path d="M4 0 L4 4 L0 4 Z" fill="#d2d2d2"/></svg>
<svg style="left:13px;top:293.5px;" width="24" height="24" viewBox="0 0 24 24"><path d="M4 18 C8 20 9 14 12 15 C15 16 14 20 19 18 M9 9 C12 4 17 6 14 10 C11 14 6 12 9 9 Z M6 13 L12 8" stroke="#d2d2d2" stroke-width="1.7" fill="none"/></svg>
<svg style="left:36px;top:313.5px;" width="4" height="4" viewBox="0 0 4 4"><path d="M4 0 L4 4 L0 4 Z" fill="#d2d2d2"/></svg>
<svg style="left:46px;top:293.5px;" width="24" height="24" viewBox="0 0 24 24"><path d="M13 3 L21 11 L18 12 L14 16 L14 19 L11 16 L5 21 L4 20 L9 14 L6 11 L9 11 L13 6 Z" fill="#d2d2d2"/></svg>
<svg style="left:69px;top:313.5px;" width="4" height="4" viewBox="0 0 4 4"><path d="M4 0 L4 4 L0 4 Z" fill="#d2d2d2"/></svg>
<svg style="left:13px;top:320px;" width="24" height="24" viewBox="0 0 24 24"><path d="M6 9 C6 3 17 3 17 9 C17 15 6 16 6 9 Z" stroke="#d2d2d2" stroke-width="1.6" fill="none"/><path d="M12 9 L12 21 L14.5 18 L19 18 Z" fill="#d2d2d2"/><path d="M9 6 L9 14 M13 5 V9" stroke="#d2d2d2" stroke-width="1"/></svg>
<svg style="left:36px;top:340px;" width="4" height="4" viewBox="0 0 4 4"><path d="M4 0 L4 4 L0 4 Z" fill="#d2d2d2"/></svg>
<svg style="left:46px;top:320px;" width="24" height="24" viewBox="0 0 24 24"><path d="M3 3 V21 H21 M3 3 L20 17 M3 9 L13 13 M3 15 L9 17 M8 5 V20 M13 9 V20" stroke="#d2d2d2" stroke-width="1.3" fill="none"/></svg>
<svg style="left:69px;top:340px;" width="4" height="4" viewBox="0 0 4 4"><path d="M4 0 L4 4 L0 4 Z" fill="#d2d2d2"/></svg>
<svg style="left:13px;top:346.5px;" width="24" height="24" viewBox="0 0 24 24"><rect x="3.5" y="3.5" width="17" height="17" stroke="#d2d2d2" stroke-width="1.6" fill="none"/><path d="M4 12 C9 9 15 15 20 12 M12 4 C9 9 15 15 12 20 M6 6 C8 8 8 10 6 12 M18 16 C16 18 16 19 18 20" stroke="#d2d2d2" stroke-width="1.3" fill="none"/></svg>
<svg style="left:46px;top:346.5px" width="24" height="24"><defs><linearGradient id="tg1" x1="0" x2="1"><stop offset="0" stop-color="#111"/><stop offset="1" stop-color="#ddd"/></linearGradient></defs><rect x="3.5" y="3.5" width="17" height="17" stroke="#d2d2d2" stroke-width="1.6" fill="url(#tg1)"/></svg>
<svg style="left:13px;top:373px;" width="24" height="24" viewBox="0 0 24 24"><path d="M16 3 L21 8 L17 11 L8 20 L4 21 L4 17 L13 8 Z" stroke="#d2d2d2" stroke-width="1.6" fill="none"/><path d="M15 4 L20 9 L17 11 L13 7 Z" fill="#d2d2d2"/></svg>
<svg style="left:36px;top:393px;" width="4" height="4" viewBox="0 0 4 4"><path d="M4 0 L4 4 L0 4 Z" fill="#d2d2d2"/></svg>
<svg style="left:46px;top:373px;" width="24" height="24" viewBox="0 0 24 24"><rect x="3" y="3" width="9" height="9" fill="#d2d2d2"/><circle cx="13" cy="14" r="5" stroke="#d2d2d2" stroke-width="1.5" fill="#6a6a6a"/><circle cx="18" cy="18" r="4" stroke="#d2d2d2" stroke-width="1.5" fill="#535353"/></svg>
<svg style="left:13px;top:399.5px;" width="24" height="24" viewBox="0 0 24 24"><rect x="9" y="8" width="10" height="13" rx="1.5" stroke="#d2d2d2" stroke-width="1.6" fill="none"/><rect x="11.5" y="4" width="5" height="4" fill="#d2d2d2"/><circle cx="14" cy="14.5" r="2.3" stroke="#d2d2d2" stroke-width="1.4" fill="none"/><circle cx="3" cy="4" r="1" fill="#d2d2d2"/><circle cx="6" cy="4" r="1" fill="#d2d2d2"/><circle cx="3" cy="7" r="1" fill="#d2d2d2"/><circle cx="6" cy="7" r="1" fill="#d2d2d2"/><circle cx="3" cy="10" r="1" fill="#d2d2d2"/></svg>
<svg style="left:36px;top:419.5px;" width="4" height="4" viewBox="0 0 4 4"><path d="M4 0 L4 4 L0 4 Z" fill="#d2d2d2"/></svg>
<svg style="left:46px;top:399.5px;" width="24" height="24" viewBox="0 0 24 24"><path d="M3 3 V20 H21" stroke="#d2d2d2" stroke-width="1.5" fill="none"/><rect x="6" y="12" width="2.5" height="8" fill="#d2d2d2"/><rect x="10.5" y="6" width="2.5" height="14" fill="#d2d2d2"/><rect x="15" y="9" width="2.5" height="11" fill="#d2d2d2"/></svg>
<svg style="left:69px;top:419.5px;" width="4" height="4" viewBox="0 0 4 4"><path d="M4 0 L4 4 L0 4 Z" fill="#d2d2d2"/></svg>
<svg style="left:13px;top:426px;" width="24" height="24" viewBox="0 0 24 24"><path d="M7 2 V8 M2 7 H9" stroke="#d2d2d2" stroke-width="1.4"/><path d="M9 9 H17 L20 12 V20 H9 Z" stroke="#d2d2d2" stroke-width="1.6" fill="#6a6a6a"/></svg>
<svg style="left:46px;top:426px;" width="24" height="24" viewBox="0 0 24 24"><path d="M19 3 L21 6 L10 19 L5 21 L6 16 Z" stroke="#d2d2d2" stroke-width="1.7" fill="none"/><path d="M17 5 L19 8" stroke="#d2d2d2" stroke-width="1.5"/></svg>
<svg style="left:69px;top:446px;" width="4" height="4" viewBox="0 0 4 4"><path d="M4 0 L4 4 L0 4 Z" fill="#d2d2d2"/></svg>
<svg style="left:13px;top:452.5px;" width="24" height="24" viewBox="0 0 24 24"><path d="M6 13 V6 C6 4.5 8 4.5 8 6 V11 V4 C8 2.5 10.5 2.5 10.5 4 V11 V3.5 C10.5 2 13 2 13 3.5 V11 V5 C13 3.5 15.5 3.5 15.5 5 V13 L18 10 C19 9 21 10 20 11.5 L15 19 C14 20.5 13 21 11 21 H10 C7 21 6 19 6 16 Z" fill="#d2d2d2"/></svg>
<svg style="left:36px;top:472.5px;" width="4" height="4" viewBox="0 0 4 4"><path d="M4 0 L4 4 L0 4 Z" fill="#d2d2d2"/></svg>
<svg style="left:46px;top:452.5px;" width="24" height="24" viewBox="0 0 24 24"><circle cx="10" cy="10" r="6.5" stroke="#d2d2d2" stroke-width="1.8" fill="none"/><path d="M14.5 14.5 L20.5 20.5" stroke="#d2d2d2" stroke-width="2.6"/></svg>
<div class="a" style="left:8px;top:486px;width:40px;height:40px;background:#535353;border:1.5px solid #3a3a3a"></div>
<div class="a" style="left:28px;top:507px;width:40px;height:39px;background:transparent;border:1.5px solid #3a3a3a"></div>
<div class="a" style="left:38.5px;top:517.5px;width:19px;height:19px;background:transparent;border:1.5px solid #3a3a3a"></div>
<div class="a" style="left:10px;top:488px;width:36px;height:36px;background:#535353;"></div>
<div class="a" style="left:8.5px;top:486.5px;width:39.5px;height:39.5px;background:transparent;border:1.5px solid #3a3a3a"></div>
<div class="t" style="left:21px;top:498px;font-size:17px;color:#e8e8e8;font-weight:bold">?</div>
<div class="t" style="left:60px;top:507px;font-size:11px;color:#d8d8d8;font-weight:bold">?</div>
<div class="t" style="left:30px;top:535px;font-size:11px;color:#d8d8d8;font-weight:bold">?</div>
<div class="t" style="left:60px;top:535px;font-size:11px;color:#d8d8d8;font-weight:bold">?</div>
<svg style="left:58px;top:489px;" width="12" height="12" viewBox="0 0 12 12"><path d="M2 10 C2 4 5 2 10 2 M7 0 L10 2 L7 5" stroke="#5e5e5e" stroke-width="1.6" fill="none"/></svg>
<svg style="left:8px;top:532px;" width="14" height="14" viewBox="0 0 14 14"><rect x="5" y="5" width="8" height="8" fill="#111" stroke="#ddd" stroke-width="1"/><rect x="1" y="1" width="7" height="7" fill="#f4f4f4" stroke="#222" stroke-width="1"/></svg>
<div class="a" style="left:11px;top:557px;width:15px;height:15px;background:#535353;border:2px solid #222;border-radius:2px"></div>
<svg style="left:34px;top:557px" width="15" height="15"><defs><linearGradient id="tg2" x1="0" x2="1"><stop offset="0" stop-color="#111"/><stop offset="0.5" stop-color="#666"/><stop offset="1" stop-color="#111"/></linearGradient></defs><rect x="1" y="1" width="13" height="13" rx="2" fill="url(#tg2)" stroke="#222" stroke-width="1.5"/></svg>
<svg style="left:56px;top:557px;" width="15" height="15" viewBox="0 0 15 15"><rect x="1" y="1" width="13" height="13" fill="#f4f4f4" stroke="#222" stroke-width="1.5"/><path d="M2 13 L13 2" stroke="#c41414" stroke-width="2.6"/></svg>
<div class="a" style="left:6px;top:576px;width:72px;height:1px;background:#4a4a4a;"></div>
<div class="a" style="left:10px;top:582px;width:19px;height:18px;background:#2f2f2f;"></div>
<svg style="left:11px;top:583px;" width="17" height="16" viewBox="0 0 17 16"><circle cx="7" cy="7" r="5" stroke="#d2d2d2" stroke-width="1.5" fill="none"/><rect x="8" y="8" width="7" height="7" fill="#d2d2d2"/></svg>
<svg style="left:33px;top:583px;" width="17" height="16" viewBox="0 0 17 16"><circle cx="7" cy="7" r="5" stroke="#d2d2d2" stroke-width="1.5" fill="none"/><rect x="8" y="8" width="7" height="7" fill="#d2d2d2" stroke="#535353" stroke-width="1"/></svg>
<svg style="left:55px;top:583px;" width="17" height="16" viewBox="0 0 17 16"><circle cx="8" cy="8" r="5" stroke="#6a6a6a" stroke-width="1.5" fill="none"/></svg>
<div class="a" style="left:6px;top:602px;width:72px;height:1px;background:#4a4a4a;"></div>
<svg style="left:29px;top:611px;" width="26" height="19" viewBox="0 0 26 19"><rect x="1" y="6" width="13" height="12" stroke="#d2d2d2" stroke-width="1.5" fill="#6a6a6a"/><rect x="10" y="1" width="15" height="12" stroke="#d2d2d2" stroke-width="1.5" fill="#6a6a6a"/></svg>
<svg style="left:34px;top:652px;" width="16" height="5" viewBox="0 0 16 5"><circle cx="2.5" cy="2.5" r="2" fill="#d2d2d2"/><circle cx="8" cy="2.5" r="2" fill="#d2d2d2"/><circle cx="13.5" cy="2.5" r="2" fill="#d2d2d2"/></svg>
<div class="a" style="left:1514px;top:85px;width:39px;height:75px;background:#545454;border-bottom:2px solid #3f3f3f"></div>
<div class="a" style="left:1524px;top:90px;width:20px;height:2px;background:#444444;"></div>
<div class="a" style="left:1514px;top:161px;width:39px;height:107px;background:#545454;border-bottom:2px solid #3f3f3f"></div>
<div class="a" style="left:1524px;top:166px;width:20px;height:2px;background:#444444;"></div>
<div class="a" style="left:1514px;top:269px;width:39px;height:106px;background:#545454;border-bottom:2px solid #3f3f3f"></div>
<div class="a" style="left:1524px;top:274px;width:20px;height:2px;background:#444444;"></div>
<div class="a" style="left:1514px;top:376px;width:39px;height:76px;background:#545454;border-bottom:2px solid #3f3f3f"></div>
<div class="a" style="left:1524px;top:381px;width:20px;height:2px;background:#444444;"></div>
<div class="a" style="left:1514px;top:453px;width:39px;height:106px;background:#545454;border-bottom:2px solid #3f3f3f"></div>
<div class="a" style="left:1524px;top:458px;width:20px;height:2px;background:#444444;"></div>
<div class="a" style="left:1514px;top:560px;width:39px;height:108px;background:#545454;border-bottom:2px solid #3f3f3f"></div>
<div class="a" style="left:1524px;top:565px;width:20px;height:2px;background:#444444;"></div>
<div class="a" style="left:1557px;top:85px;width:41px;height:75px;background:#545454;border-bottom:2px solid #3f3f3f"></div>
<div class="a" style="left:1568px;top:90px;width:20px;height:2px;background:#444444;"></div>
<svg style="left:1524px;top:101px;" width="21" height="21" viewBox="0 0 21 21"><path d="M10 2 C3 2 0 7 1 11 C2 15 6 14 7 16 C8 19 11 19 15 18 C20 16 21 12 20 8 C19 4 15 2 10 2 Z" fill="#c8c8c8"/><circle cx="6" cy="9" r="1.4" fill="#444"/><circle cx="10" cy="6" r="1.4" fill="#444"/><circle cx="15" cy="7" r="1.4" fill="#444"/><circle cx="17" cy="11" r="1.4" fill="#444"/><circle cx="12" cy="14" r="1.6" fill="#444"/></svg>
<svg style="left:1525px;top:132px" width="20" height="20"><defs><linearGradient id="rg1" x1="0" y1="0" x2="1" y2="1"><stop offset="0" stop-color="#111"/><stop offset="1" stop-color="#eee"/></linearGradient></defs><path d="M2 2 C10 2 17 8 18 18 H2 Z" fill="url(#rg1)" stroke="#c8c8c8" stroke-width="1.5"/></svg>
<svg style="left:1524px;top:180px;" width="21" height="21" viewBox="0 0 21 21"><rect x="1" y="2" width="19" height="14" fill="none" stroke="#c8c8c8" stroke-width="1.5"/><rect x="3" y="4" width="4" height="4" fill="#c8c8c8"/><rect x="8.5" y="4" width="4" height="4" fill="#c8c8c8"/><rect x="14" y="4" width="4" height="4" fill="#c8c8c8"/><rect x="3" y="10" width="4" height="4" fill="#c8c8c8"/><rect x="8.5" y="10" width="4" height="4" fill="#c8c8c8"/><rect x="14" y="10" width="4" height="4" fill="#c8c8c8"/></svg>
<svg style="left:1524px;top:207px;" width="21" height="21" viewBox="0 0 21 21"><rect x="5" y="13" width="11" height="9" fill="#c8c8c8"/><path d="M7 13 L4 4 M10 13 L10 2 M13 13 L17 5" stroke="#c8c8c8" stroke-width="2"/><circle cx="4" cy="4" r="2" fill="#c8c8c8"/><circle cx="17" cy="5" r="2.3" fill="#c8c8c8"/><path d="M10 1 L8.5 5 H11.5 Z" fill="#c8c8c8"/></svg>
<svg style="left:1524px;top:238px;" width="21" height="21" viewBox="0 0 21 21"><circle cx="10.5" cy="5.5" r="4.3" fill="#c8c8c8"/><circle cx="5.5" cy="11" r="4.3" fill="#c8c8c8"/><circle cx="15.5" cy="11" r="4.3" fill="#c8c8c8"/><path d="M10.5 10 V18 M6 19 H15" stroke="#c8c8c8" stroke-width="2"/></svg>
<svg style="left:1524px;top:287px;" width="21" height="21" viewBox="0 0 21 21"><rect x="1" y="2" width="19" height="3" fill="#c8c8c8"/><rect x="1" y="8" width="19" height="3" fill="#c8c8c8"/><rect x="1" y="14" width="19" height="3" fill="#c8c8c8"/></svg>
<svg style="left:1525px;top:317px" width="20" height="17"><defs><linearGradient id="rg2" x1="0" x2="1"><stop offset="0" stop-color="#111"/><stop offset="1" stop-color="#eee"/></linearGradient></defs><rect x="1" y="1" width="18" height="15" fill="url(#rg2)" stroke="#c8c8c8" stroke-width="1.5"/></svg>
<svg style="left:1524px;top:347px;" width="21" height="21" viewBox="0 0 21 21"><circle cx="8" cy="8" r="7" fill="#c4c4c4"/><circle cx="13" cy="13" r="7" fill="#8a8a8a" stroke="#c8c8c8" stroke-width="1"/></svg>
<svg style="left:1524px;top:393px;" width="21" height="21" viewBox="0 0 21 21"><circle cx="10.5" cy="10.5" r="8" fill="#c8c8c8"/><circle cx="10.5" cy="10.5" r="10" fill="none" stroke="#c8c8c8" stroke-width="1" stroke-dasharray="1.5 1.5"/></svg>
<svg style="left:1524px;top:424px;" width="21" height="21" viewBox="0 0 21 21"><rect x="7" y="2" width="12" height="12" fill="none" stroke="#c8c8c8" stroke-width="1.6"/><circle cx="5" cy="14" r="3.5" fill="#535353" stroke="#c8c8c8" stroke-width="1.5"/><rect x="4" y="14" width="6" height="6" fill="#535353" stroke="#c8c8c8" stroke-width="1.5"/></svg>
<svg style="left:1524px;top:470px;" width="21" height="21" viewBox="0 0 21 21"><path d="M10.5 1 L20 6.5 L10.5 12 L1 6.5 Z" fill="#c8c8c8"/><path d="M1 11 L10.5 16.5 L20 11" stroke="#c8c8c8" stroke-width="2.4" fill="none"/></svg>
<svg style="left:1524px;top:500px;" width="21" height="21" viewBox="0 0 21 21"><path d="M11 3 H3 V19 H18 V11" stroke="#c8c8c8" stroke-width="1.8" fill="none"/><path d="M10 12 L19 3 M13 2 H20 V9" stroke="#c8c8c8" stroke-width="1.8" fill="none"/></svg>
<svg style="left:1524px;top:530px;" width="21" height="21" viewBox="0 0 21 21"><rect x="1.5" y="1.5" width="11" height="11" fill="none" stroke="#c8c8c8" stroke-width="1.6"/><rect x="7.5" y="8.5" width="12" height="11" fill="#535353" stroke="#c8c8c8" stroke-width="1.6"/></svg>
<svg style="left:1524px;top:577px;" width="21" height="21" viewBox="0 0 21 21"><rect x="4" y="4" width="13" height="13" fill="none" stroke="#c8c8c8" stroke-width="1.4" stroke-dasharray="2 2"/><rect x="1" y="1" width="5" height="5" fill="#c8c8c8"/><rect x="15" y="1" width="5" height="5" fill="#c8c8c8"/><rect x="1" y="15" width="5" height="5" fill="#c8c8c8"/><rect x="15" y="15" width="5" height="5" fill="#c8c8c8"/></svg>
<svg style="left:1524px;top:608px;" width="21" height="21" viewBox="0 0 21 21"><rect x="1" y="0" width="2" height="20" fill="#c8c8c8"/><rect x="5" y="3" width="8" height="6" fill="#c8c8c8"/><rect x="5" y="12" width="14" height="6" fill="#c8c8c8"/></svg>
<svg style="left:1524px;top:640px;" width="21" height="21" viewBox="0 0 21 21"><rect x="1" y="1" width="10" height="10" fill="#c8c8c8"/><rect x="5" y="5" width="4" height="4" fill="#535353"/><rect x="8" y="8" width="11" height="11" fill="#c8c8c8"/><rect x="10" y="10" width="4" height="4" fill="#8a8a8a"/></svg>
<svg style="left:1568px;top:100px;" width="22" height="21" viewBox="0 0 22 21"><path d="M2 5 L9 1 L16 5 V13 L9 17 L2 13 Z" fill="#bdbdbd" stroke="#c8c8c8" stroke-width="1"/><path d="M9 8 L16 5 M9 8 L2 5 M9 8 V17" stroke="#666" stroke-width="1"/><rect x="17" y="3" width="4" height="4" fill="#c8c8c8"/><rect x="17" y="9" width="4" height="4" fill="#c8c8c8"/><rect x="1" y="17" width="20" height="4" fill="#c8c8c8"/></svg>
<svg style="left:1566px;top:133px;" width="25" height="19" viewBox="0 0 25 19"><path d="M7 17 C2 17 1 12 4 9 C5 4 11 2 14 5 C18 3 23 6 22 11 C24 14 22 17 18 17 Z" fill="none" stroke="#c8c8c8" stroke-width="2"/><path d="M7 13 C5 10 9 8 11 10 C13 12 15 13 17 11 C19 9 17 7 15 8" fill="none" stroke="#c8c8c8" stroke-width="1.8"/></svg>
<div class="a" style="left:84px;top:936px;width:59px;height:17px;background:#474747;"></div>
<div class="t" style="left:91px;top:940px;font-size:11px;color:#e0e0e0;letter-spacing:-0.4px">25%</div>
<div class="a" style="left:144px;top:936px;width:19px;height:17px;background:#4a4a4a;"></div>
<svg style="left:148px;top:942px;" width="9" height="6" viewBox="0 0 9 6"><path d="M1 1 L4.5 5 L8 1" stroke="#d8d8d8" stroke-width="1.8" fill="none"/></svg>
<div class="a" style="left:164px;top:936px;width:45px;height:17px;background:#505050;"></div>
<svg style="left:175px;top:940px;" width="9" height="10" viewBox="0 0 9 10"><rect x="0" y="1" width="1.6" height="8" fill="#6e6e6e"/><path d="M8 1 L2.5 5 L8 9 Z" fill="#6e6e6e"/></svg>
<svg style="left:194px;top:940px;" width="7" height="10" viewBox="0 0 7 10"><path d="M6 1 L1 5 L6 9 Z" fill="#6e6e6e"/></svg>
<div class="a" style="left:210px;top:936px;width:44px;height:17px;background:#474747;"></div>
<div class="t" style="left:214px;top:940px;font-size:11px;color:#e6e6e6;font-weight:bold">1</div>
<div class="a" style="left:255px;top:936px;width:19px;height:17px;background:#4a4a4a;"></div>
<svg style="left:259px;top:942px;" width="9" height="6" viewBox="0 0 9 6"><path d="M1 1 L4.5 5 L8 1" stroke="#d8d8d8" stroke-width="1.8" fill="none"/></svg>
<svg style="left:285px;top:940px;" width="7" height="10" viewBox="0 0 7 10"><path d="M1 1 L6 5 L1 9 Z" fill="#6e6e6e"/></svg>
<svg style="left:302px;top:940px;" width="9" height="10" viewBox="0 0 9 10"><path d="M1 1 L6.5 5 L1 9 Z" fill="#6e6e6e"/><rect x="7.4" y="1" width="1.6" height="8" fill="#6e6e6e"/></svg>
<div class="a" style="left:320px;top:936px;width:1px;height:17px;background:#4a4a4a;"></div>
<div class="t" style="left:410px;top:941px;font-size:11.5px;color:#dedede;letter-spacing:-0.4px">Selection</div>
<div class="a" style="left:542px;top:936px;width:20px;height:17px;background:#4e4e4e;"></div>
<svg style="left:549px;top:941px;" width="8" height="11" viewBox="0 0 8 11"><path d="M1 0.5 L7 5.5 L1 10.5 Z" fill="#e0e0e0"/></svg>
<svg style="left:569px;top:940px;" width="7" height="11" viewBox="0 0 7 11"><path d="M6 1 L1.5 5.5 L6 10" stroke="#bdbdbd" stroke-width="1.6" fill="none"/></svg>
<div class="a" style="left:1032px;top:937px;width:28px;height:14px;background:#5e5e5e;border-radius:7px"></div>
<svg style="left:1479px;top:939px;" width="7" height="11" viewBox="0 0 7 11"><path d="M1 1 L5.5 5.5 L1 10" stroke="#bdbdbd" stroke-width="1.6" fill="none"/></svg>
<div class="a" style="left:1493px;top:540px;width:16px;height:28px;background:#5e5e5e;border-radius:8px"></div>
<svg style="left:1495px;top:921px;" width="11" height="7" viewBox="0 0 11 7"><path d="M1 1 L5.5 5.5 L10 1" stroke="#bdbdbd" stroke-width="1.6" fill="none"/></svg>
<svg style="left:0;top:0;width:0;height:0"><defs>
<linearGradient id="lgA" gradientUnits="userSpaceOnUse" x1="0" y1="0" x2="100" y2="100"><stop offset="0" stop-color="#ffe033"/><stop offset="0.45" stop-color="#f9c81f"/><stop offset="1" stop-color="#f4a51c"/></linearGradient>
<linearGradient id="lgB" gradientUnits="userSpaceOnUse" x1="100" y1="0" x2="0" y2="100"><stop offset="0" stop-color="#f5a71c"/><stop offset="0.5" stop-color="#fcd42a"/><stop offset="1" stop-color="#ffe033"/></linearGradient>
<radialGradient id="lgC" cx="0.45" cy="0.45" r="0.6"><stop offset="0" stop-color="#ffd92b"/><stop offset="1" stop-color="#f29d18"/></radialGradient>
<clipPath id="lclip"><rect x="-1" y="-1" width="102" height="102"/></clipPath>
<symbol id="logo" viewBox="-4 -4 108 108">
<g clip-path="url(#lclip)">
<g transform="translate(2.2 2.2)" fill="none" stroke="#1a2233" stroke-width="12.5" opacity="0.6">
<circle cx="50" cy="3" r="29"/><circle cx="3" cy="50" r="29"/><circle cx="97" cy="50" r="29"/><circle cx="50" cy="97" r="29"/>
</g>
<g fill="none" stroke-width="12.5">
<circle cx="50" cy="3" r="29" stroke="url(#lgA)"/><circle cx="97" cy="50" r="29" stroke="url(#lgB)"/><circle cx="3" cy="50" r="29" stroke="url(#lgB)"/><circle cx="50" cy="97" r="29" stroke="url(#lgA)"/>
</g>
</g>
<circle cx="51.5" cy="50.5" r="12.5" fill="#1a2233" opacity="0.5"/>
<circle cx="50" cy="49" r="12.5" fill="url(#lgC)"/>
</symbol>
<symbol id="logoS" viewBox="-6 -6 112 112">
<g clip-path="url(#lclip)">
<g fill="none" stroke-width="24" stroke="#2a2410" opacity="0.55" transform="translate(1.5 1.5)">
<circle cx="50" cy="-6" r="41"/><circle cx="106" cy="50" r="41"/><circle cx="-6" cy="50" r="41"/><circle cx="50" cy="106" r="41"/>
</g>
<g fill="none" stroke-width="19">
<circle cx="50" cy="-6" r="41" stroke="url(#lgA)"/><circle cx="106" cy="50" r="41" stroke="url(#lgB)"/><circle cx="-6" cy="50" r="41" stroke="url(#lgB)"/><circle cx="50" cy="106" r="41" stroke="url(#lgA)"/>
</g></g>
<circle cx="50" cy="50" r="10" fill="#f4b51f"/>
<circle cx="41" cy="41" r="3" fill="#a86a10" opacity="0.8"/><circle cx="59" cy="41" r="3" fill="#a86a10" opacity="0.8"/><circle cx="41" cy="59" r="3" fill="#a86a10" opacity="0.8"/><circle cx="59" cy="59" r="3" fill="#a86a10" opacity="0.8"/>
</symbol>
<filter id="sh" x="-10%" y="-10%" width="130%" height="130%"><feGaussianBlur stdDeviation="1.3"/></filter>
</defs></svg>
<svg style="left:218px;top:121px;overflow:hidden" width="924" height="469" viewBox="218 121 924 469"><rect x="389.5" y="112" width="212" height="246" fill="#000" opacity="0.45" filter="url(#sh)"/><rect x="387.5" y="110" width="148" height="246" fill="#094f8b" /><rect x="535.5" y="110" width="3.5" height="246" fill="#e8eef5" /><rect x="539" y="110" width="60.5" height="246" fill="#094f8b" /><use href="#logo" x="417" y="170" width="96" height="96"/><text transform="translate(566 283) rotate(-90)" font-family="Liberation Sans" font-weight="bold" font-size="18" fill="#f8c61f" stroke="#f8c61f" stroke-width="1.6" stroke-linejoin="round" textLength="164" lengthAdjust="spacingAndGlyphs">THE GRAPHIC OWL</text><text transform="translate(577.5 281) rotate(-90)" font-family="Liberation Sans" font-weight="bold" font-size="6.5" fill="#a6c3ea" textLength="153" lengthAdjust="spacing">YOUR PERFECT DESTINATION</text><use href="#logoS" x="551" y="287" width="28" height="28"/><rect x="631.7" y="112" width="201" height="71" fill="#000" opacity="0.45" filter="url(#sh)"/><rect x="629.7" y="110" width="201" height="70.7" fill="#094f8b" /><path d="M728 150 L781 121" stroke="#0a3f72" stroke-width="2"/><use href="#logo" x="711" y="98" width="36" height="36"/><text x="690.6" y="162.5" font-family="Liberation Sans" font-weight="bold" font-size="4" fill="#f2f6fb" textLength="78.39999999999998" lengthAdjust="spacingAndGlyphs">Lorem Ipsum is simply dummy text of the printing</text><text x="697" y="167.1" font-family="Liberation Sans" font-weight="bold" font-size="4" fill="#f2f6fb" textLength="67" lengthAdjust="spacingAndGlyphs">and typesetting industry. Lorem Ipsum has</text><text x="706" y="171.7" font-family="Liberation Sans" font-weight="bold" font-size="4" fill="#f2f6fb" textLength="50" lengthAdjust="spacingAndGlyphs">been the industry standard</text><rect x="633.6" y="194.4" width="199" height="101.6" fill="#000" opacity="0.4" filter="url(#sh)"/><rect x="631.6" y="192.4" width="199" height="101.6" fill="#ffffff" /><use href="#logoS" x="645" y="202" width="35" height="35"/><rect x="692.5" y="205" width="1" height="15" fill="#9a9a9a" /><text x="697" y="209" font-family="Liberation Sans" font-size="4" fill="#8a8a8a" textLength="54" lengthAdjust="spacingAndGlyphs">Lorem Ipsum is Simply Dummy</text><text x="697" y="214" font-family="Liberation Sans" font-size="4" fill="#8a8a8a" textLength="68" lengthAdjust="spacingAndGlyphs">text of the printing and typesetting</text><text x="697" y="219" font-family="Liberation Sans" font-size="4" fill="#8a8a8a" textLength="58" lengthAdjust="spacingAndGlyphs">industry. Lorem Ipsum has been</text><rect x="771" y="205" width="1" height="13" fill="#9a9a9a" /><text x="775" y="209" font-family="Liberation Sans" font-size="4" fill="#8a8a8a" textLength="26" lengthAdjust="spacingAndGlyphs">Lorem Ipsum</text><text x="775" y="214" font-family="Liberation Sans" font-size="4" fill="#8a8a8a" textLength="39" lengthAdjust="spacingAndGlyphs">is simply dummy text</text><text x="698" y="263.5" font-family="Liberation Sans" font-weight="bold" font-size="4.5" fill="#222" textLength="20" lengthAdjust="spacingAndGlyphs">Lorem Ipsum</text><rect x="698" y="267.8" width="71" height="1.2" fill="#777" /><rect x="698" y="272.6" width="71" height="1.2" fill="#777" /><rect x="631.3" y="309.7" width="72.2" height="48.1" fill="#000" opacity="0.45" filter="url(#sh)"/><rect x="629.3" y="307.7" width="72.2" height="48.1" fill="#094f8b" /><use href="#logoS" x="652" y="319" width="26" height="26"/><rect x="746" y="311" width="72" height="47" fill="#000" opacity="0.35" filter="url(#sh)"/><rect x="744" y="309" width="72" height="47" fill="#ffffff" /><text x="762" y="317.5" font-family="Liberation Sans" font-weight="bold" font-size="4.2" fill="#222" textLength="36" lengthAdjust="spacingAndGlyphs">Muhammad Mamun</text><text x="766" y="322.5" font-family="Liberation Sans" font-weight="bold" font-size="4.2" fill="#222" textLength="27" lengthAdjust="spacingAndGlyphs">Graphic Designer</text><text x="749" y="348" font-family="Liberation Sans" font-size="3.5" fill="#777" textLength="27" lengthAdjust="spacingAndGlyphs">+880 1234 567 890</text><text x="783" y="348" font-family="Liberation Sans" font-size="3.5" fill="#777" textLength="28" lengthAdjust="spacingAndGlyphs">info@graphicowl.com</text><rect x="779.5" y="343" width="0.8" height="6" fill="#777" /><rect x="862" y="113" width="204" height="246" fill="#000" opacity="0.65" filter="url(#sh)"/><rect x="859" y="110" width="204" height="246" fill="#ffffff" /><use href="#logo" x="987" y="96" width="32" height="32"/><rect x="988.0" y="136.0" width="4.1" height="1.5" fill="#222" opacity="0.58"/><rect x="992.8" y="136.0" width="3.2" height="1.5" fill="#222" opacity="0.58"/><rect x="996.7" y="136.0" width="5.9" height="1.5" fill="#222" opacity="0.58"/><rect x="1003.2" y="136.0" width="2.8" height="1.5" fill="#222" opacity="0.58"/><rect x="1006.7" y="136.0" width="5.2" height="1.5" fill="#222" opacity="0.58"/><rect x="1012.6" y="136.0" width="4.3" height="1.5" fill="#222" opacity="0.58"/><rect x="1017.6" y="136.0" width="2.7" height="1.5" fill="#222" opacity="0.58"/><rect x="988.0" y="139.1" width="5.0" height="1.5" fill="#222" opacity="0.58"/><rect x="993.7" y="139.1" width="2.6" height="1.5" fill="#222" opacity="0.58"/><rect x="996.9" y="139.1" width="4.6" height="1.5" fill="#222" opacity="0.58"/><rect x="1002.2" y="139.1" width="2.7" height="1.5" fill="#222" opacity="0.58"/><rect x="1005.6" y="139.1" width="2.8" height="1.5" fill="#222" opacity="0.58"/><rect x="1009.1" y="139.1" width="4.6" height="1.5" fill="#222" opacity="0.58"/><rect x="988.0" y="146.0" width="6.2" height="1.5" fill="#222" opacity="0.58"/><rect x="994.8" y="146.0" width="2.8" height="1.5" fill="#222" opacity="0.58"/><rect x="998.2" y="146.0" width="3.3" height="1.5" fill="#222" opacity="0.58"/><rect x="1002.1" y="146.0" width="5.2" height="1.5" fill="#222" opacity="0.58"/><rect x="1007.9" y="146.0" width="6.8" height="1.5" fill="#222" opacity="0.58"/><rect x="1015.2" y="146.0" width="5.0" height="1.5" fill="#222" opacity="0.58"/><rect x="1020.8" y="146.0" width="4.1" height="1.5" fill="#222" opacity="0.58"/><rect x="1025.5" y="146.0" width="6.9" height="1.5" fill="#222" opacity="0.58"/><rect x="1033.0" y="146.0" width="2.4" height="1.5" fill="#222" opacity="0.58"/><rect x="1036.1" y="146.0" width="6.3" height="1.5" fill="#222" opacity="0.58"/><rect x="988.0" y="149.1" width="3.9" height="1.5" fill="#222" opacity="0.58"/><rect x="992.6" y="149.1" width="3.1" height="1.5" fill="#222" opacity="0.58"/><rect x="996.4" y="149.1" width="3.0" height="1.5" fill="#222" opacity="0.58"/><rect x="1000.1" y="149.1" width="4.0" height="1.5" fill="#222" opacity="0.58"/><rect x="1004.8" y="149.1" width="6.7" height="1.5" fill="#222" opacity="0.58"/><rect x="1012.1" y="149.1" width="3.3" height="1.5" fill="#222" opacity="0.58"/><rect x="1016.1" y="149.1" width="5.4" height="1.5" fill="#222" opacity="0.58"/><rect x="1022.2" y="149.1" width="5.7" height="1.5" fill="#222" opacity="0.58"/><rect x="1028.7" y="149.1" width="4.3" height="1.5" fill="#222" opacity="0.58"/><rect x="1033.7" y="149.1" width="5.3" height="1.5" fill="#222" opacity="0.58"/><rect x="1039.6" y="149.1" width="2.7" height="1.5" fill="#222" opacity="0.58"/><rect x="988.0" y="152.2" width="2.8" height="1.5" fill="#222" opacity="0.58"/><rect x="991.5" y="152.2" width="3.6" height="1.5" fill="#222" opacity="0.58"/><rect x="995.8" y="152.2" width="6.2" height="1.5" fill="#222" opacity="0.58"/><rect x="1002.7" y="152.2" width="4.8" height="1.5" fill="#222" opacity="0.58"/><rect x="1008.2" y="152.2" width="4.2" height="1.5" fill="#222" opacity="0.58"/><rect x="1013.1" y="152.2" width="5.7" height="1.5" fill="#222" opacity="0.58"/><rect x="1019.5" y="152.2" width="5.0" height="1.5" fill="#222" opacity="0.58"/><rect x="1025.2" y="152.2" width="4.1" height="1.5" fill="#222" opacity="0.58"/><rect x="1030.0" y="152.2" width="6.8" height="1.5" fill="#222" opacity="0.58"/><rect x="895.0" y="173.5" width="3.2" height="1.5" fill="#333" opacity="0.7"/><rect x="898.8" y="173.5" width="4.6" height="1.5" fill="#333" opacity="0.7"/><rect x="888.0" y="176.4" width="3.9" height="1.5" fill="#333" opacity="0.7"/><rect x="892.6" y="176.4" width="5.1" height="1.5" fill="#333" opacity="0.7"/><rect x="898.2" y="176.4" width="5.2" height="1.5" fill="#333" opacity="0.7"/><rect x="894.0" y="179.3" width="2.0" height="1.5" fill="#333" opacity="0.7"/><rect x="896.4" y="179.3" width="1.8" height="1.5" fill="#333" opacity="0.7"/><rect x="898.7" y="179.3" width="4.9" height="1.5" fill="#333" opacity="0.7"/><rect x="882.0" y="182.2" width="3.7" height="1.5" fill="#333" opacity="0.7"/><rect x="886.3" y="182.2" width="3.5" height="1.5" fill="#333" opacity="0.7"/><rect x="890.5" y="182.2" width="7.4" height="1.5" fill="#333" opacity="0.7"/><rect x="898.6" y="182.2" width="4.7" height="1.5" fill="#333" opacity="0.7"/><rect x="876.0" y="185.1" width="6.4" height="1.5" fill="#333" opacity="0.7"/><rect x="883.0" y="185.1" width="4.6" height="1.5" fill="#333" opacity="0.7"/><rect x="888.3" y="185.1" width="5.4" height="1.5" fill="#333" opacity="0.7"/><rect x="894.3" y="185.1" width="3.0" height="1.5" fill="#333" opacity="0.7"/><rect x="898.0" y="185.1" width="5.4" height="1.5" fill="#333" opacity="0.7"/><rect x="914.0" y="174.0" width="7.2" height="1.5" fill="#1e1e1e" opacity="0.58"/><rect x="921.8" y="174.0" width="5.3" height="1.5" fill="#1e1e1e" opacity="0.58"/><rect x="927.8" y="174.0" width="6.5" height="1.5" fill="#1e1e1e" opacity="0.58"/><rect x="935.0" y="174.0" width="6.1" height="1.5" fill="#1e1e1e" opacity="0.58"/><rect x="941.7" y="174.0" width="2.8" height="1.5" fill="#1e1e1e" opacity="0.58"/><rect x="945.2" y="174.0" width="6.6" height="1.5" fill="#1e1e1e" opacity="0.58"/><rect x="952.5" y="174.0" width="5.7" height="1.5" fill="#1e1e1e" opacity="0.58"/><rect x="958.8" y="174.0" width="4.1" height="1.5" fill="#1e1e1e" opacity="0.58"/><rect x="963.6" y="174.0" width="2.6" height="1.5" fill="#1e1e1e" opacity="0.58"/><rect x="966.9" y="174.0" width="7.1" height="1.5" fill="#1e1e1e" opacity="0.58"/><rect x="974.7" y="174.0" width="5.0" height="1.5" fill="#1e1e1e" opacity="0.58"/><rect x="980.4" y="174.0" width="6.3" height="1.5" fill="#1e1e1e" opacity="0.58"/><rect x="987.5" y="174.0" width="7.2" height="1.5" fill="#1e1e1e" opacity="0.58"/><rect x="995.4" y="174.0" width="6.3" height="1.5" fill="#1e1e1e" opacity="0.58"/><rect x="1002.4" y="174.0" width="7.4" height="1.5" fill="#1e1e1e" opacity="0.58"/><rect x="1010.5" y="174.0" width="4.6" height="1.5" fill="#1e1e1e" opacity="0.58"/><rect x="1015.8" y="174.0" width="6.8" height="1.5" fill="#1e1e1e" opacity="0.58"/><rect x="1023.2" y="174.0" width="4.9" height="1.5" fill="#1e1e1e" opacity="0.58"/><rect x="1028.8" y="174.0" width="7.5" height="1.5" fill="#1e1e1e" opacity="0.58"/><rect x="914.0" y="177.2" width="7.2" height="1.5" fill="#1e1e1e" opacity="0.58"/><rect x="921.8" y="177.2" width="3.0" height="1.5" fill="#1e1e1e" opacity="0.58"/><rect x="925.5" y="177.2" width="3.2" height="1.5" fill="#1e1e1e" opacity="0.58"/><rect x="929.3" y="177.2" width="3.6" height="1.5" fill="#1e1e1e" opacity="0.58"/><rect x="933.6" y="177.2" width="7.6" height="1.5" fill="#1e1e1e" opacity="0.58"/><rect x="941.9" y="177.2" width="4.8" height="1.5" fill="#1e1e1e" opacity="0.58"/><rect x="947.4" y="177.2" width="5.8" height="1.5" fill="#1e1e1e" opacity="0.58"/><rect x="953.9" y="177.2" width="4.1" height="1.5" fill="#1e1e1e" opacity="0.58"/><rect x="958.6" y="177.2" width="5.2" height="1.5" fill="#1e1e1e" opacity="0.58"/><rect x="964.5" y="177.2" width="4.5" height="1.5" fill="#1e1e1e" opacity="0.58"/><rect x="969.7" y="177.2" width="4.3" height="1.5" fill="#1e1e1e" opacity="0.58"/><rect x="974.7" y="177.2" width="5.6" height="1.5" fill="#1e1e1e" opacity="0.58"/><rect x="981.0" y="177.2" width="5.6" height="1.5" fill="#1e1e1e" opacity="0.58"/><rect x="987.2" y="177.2" width="7.3" height="1.5" fill="#1e1e1e" opacity="0.58"/><rect x="995.2" y="177.2" width="6.1" height="1.5" fill="#1e1e1e" opacity="0.58"/><rect x="1002.0" y="177.2" width="7.4" height="1.5" fill="#1e1e1e" opacity="0.58"/><rect x="1010.1" y="177.2" width="7.0" height="1.5" fill="#1e1e1e" opacity="0.58"/><rect x="1017.8" y="177.2" width="7.8" height="1.5" fill="#1e1e1e" opacity="0.58"/><rect x="1026.3" y="177.2" width="6.0" height="1.5" fill="#1e1e1e" opacity="0.58"/><rect x="1033.0" y="177.2" width="3.3" height="1.5" fill="#1e1e1e" opacity="0.58"/><rect x="914.0" y="180.4" width="7.1" height="1.5" fill="#1e1e1e" opacity="0.58"/><rect x="921.8" y="180.4" width="7.6" height="1.5" fill="#1e1e1e" opacity="0.58"/><rect x="930.1" y="180.4" width="7.3" height="1.5" fill="#1e1e1e" opacity="0.58"/><rect x="938.1" y="180.4" width="5.5" height="1.5" fill="#1e1e1e" opacity="0.58"/><rect x="944.2" y="180.4" width="6.3" height="1.5" fill="#1e1e1e" opacity="0.58"/><rect x="951.2" y="180.4" width="3.6" height="1.5" fill="#1e1e1e" opacity="0.58"/><rect x="955.5" y="180.4" width="6.9" height="1.5" fill="#1e1e1e" opacity="0.58"/><rect x="963.1" y="180.4" width="5.5" height="1.5" fill="#1e1e1e" opacity="0.58"/><rect x="969.3" y="180.4" width="4.0" height="1.5" fill="#1e1e1e" opacity="0.58"/><rect x="973.9" y="180.4" width="2.8" height="1.5" fill="#1e1e1e" opacity="0.58"/><rect x="977.4" y="180.4" width="7.0" height="1.5" fill="#1e1e1e" opacity="0.58"/><rect x="985.1" y="180.4" width="7.8" height="1.5" fill="#1e1e1e" opacity="0.58"/><rect x="993.6" y="180.4" width="2.9" height="1.5" fill="#1e1e1e" opacity="0.58"/><rect x="997.2" y="180.4" width="6.7" height="1.5" fill="#1e1e1e" opacity="0.58"/><rect x="1004.6" y="180.4" width="4.6" height="1.5" fill="#1e1e1e" opacity="0.58"/><rect x="1009.9" y="180.4" width="3.3" height="1.5" fill="#1e1e1e" opacity="0.58"/><rect x="1013.9" y="180.4" width="4.0" height="1.5" fill="#1e1e1e" opacity="0.58"/><rect x="1018.6" y="180.4" width="6.6" height="1.5" fill="#1e1e1e" opacity="0.58"/><rect x="1025.8" y="180.4" width="7.1" height="1.5" fill="#1e1e1e" opacity="0.58"/><rect x="1033.6" y="180.4" width="2.7" height="1.5" fill="#1e1e1e" opacity="0.58"/><rect x="914.0" y="183.6" width="5.8" height="1.5" fill="#1e1e1e" opacity="0.58"/><rect x="920.5" y="183.6" width="2.7" height="1.5" fill="#1e1e1e" opacity="0.58"/><rect x="923.9" y="183.6" width="6.3" height="1.5" fill="#1e1e1e" opacity="0.58"/><rect x="930.9" y="183.6" width="4.2" height="1.5" fill="#1e1e1e" opacity="0.58"/><rect x="935.8" y="183.6" width="7.2" height="1.5" fill="#1e1e1e" opacity="0.58"/><rect x="943.7" y="183.6" width="7.8" height="1.5" fill="#1e1e1e" opacity="0.58"/><rect x="952.2" y="183.6" width="5.2" height="1.5" fill="#1e1e1e" opacity="0.58"/><rect x="958.0" y="183.6" width="7.9" height="1.5" fill="#1e1e1e" opacity="0.58"/><rect x="966.6" y="183.6" width="4.1" height="1.5" fill="#1e1e1e" opacity="0.58"/><rect x="971.4" y="183.6" width="2.9" height="1.5" fill="#1e1e1e" opacity="0.58"/><rect x="975.0" y="183.6" width="5.7" height="1.5" fill="#1e1e1e" opacity="0.58"/><rect x="981.3" y="183.6" width="2.6" height="1.5" fill="#1e1e1e" opacity="0.58"/><rect x="984.6" y="183.6" width="3.5" height="1.5" fill="#1e1e1e" opacity="0.58"/><rect x="988.9" y="183.6" width="4.7" height="1.5" fill="#1e1e1e" opacity="0.58"/><rect x="994.2" y="183.6" width="5.8" height="1.5" fill="#1e1e1e" opacity="0.58"/><rect x="1000.7" y="183.6" width="3.3" height="1.5" fill="#1e1e1e" opacity="0.58"/><rect x="1004.6" y="183.6" width="2.7" height="1.5" fill="#1e1e1e" opacity="0.58"/><rect x="1008.0" y="183.6" width="7.1" height="1.5" fill="#1e1e1e" opacity="0.58"/><rect x="1015.8" y="183.6" width="4.2" height="1.5" fill="#1e1e1e" opacity="0.58"/><rect x="1020.7" y="183.6" width="7.6" height="1.5" fill="#1e1e1e" opacity="0.58"/><rect x="1029.0" y="183.6" width="7.3" height="1.5" fill="#1e1e1e" opacity="0.58"/><rect x="914.0" y="186.8" width="4.5" height="1.5" fill="#1e1e1e" opacity="0.58"/><rect x="919.2" y="186.8" width="4.9" height="1.5" fill="#1e1e1e" opacity="0.58"/><rect x="924.8" y="186.8" width="5.3" height="1.5" fill="#1e1e1e" opacity="0.58"/><rect x="930.7" y="186.8" width="5.9" height="1.5" fill="#1e1e1e" opacity="0.58"/><rect x="937.3" y="186.8" width="5.7" height="1.5" fill="#1e1e1e" opacity="0.58"/><rect x="943.7" y="186.8" width="5.5" height="1.5" fill="#1e1e1e" opacity="0.58"/><rect x="949.8" y="186.8" width="5.8" height="1.5" fill="#1e1e1e" opacity="0.58"/><rect x="956.3" y="186.8" width="7.5" height="1.5" fill="#1e1e1e" opacity="0.58"/><rect x="964.5" y="186.8" width="5.2" height="1.5" fill="#1e1e1e" opacity="0.58"/><rect x="970.4" y="186.8" width="4.8" height="1.5" fill="#1e1e1e" opacity="0.58"/><rect x="975.8" y="186.8" width="6.3" height="1.5" fill="#1e1e1e" opacity="0.58"/><rect x="982.9" y="186.8" width="3.7" height="1.5" fill="#1e1e1e" opacity="0.58"/><rect x="987.3" y="186.8" width="4.1" height="1.5" fill="#1e1e1e" opacity="0.58"/><rect x="992.0" y="186.8" width="7.7" height="1.5" fill="#1e1e1e" opacity="0.58"/><rect x="1000.4" y="186.8" width="5.3" height="1.5" fill="#1e1e1e" opacity="0.58"/><rect x="1006.4" y="186.8" width="5.4" height="1.5" fill="#1e1e1e" opacity="0.58"/><rect x="1012.5" y="186.8" width="2.5" height="1.5" fill="#1e1e1e" opacity="0.58"/><rect x="1015.7" y="186.8" width="4.7" height="1.5" fill="#1e1e1e" opacity="0.58"/><rect x="1021.0" y="186.8" width="5.6" height="1.5" fill="#1e1e1e" opacity="0.58"/><rect x="1027.3" y="186.8" width="2.6" height="1.5" fill="#1e1e1e" opacity="0.58"/><rect x="1030.5" y="186.8" width="5.8" height="1.5" fill="#1e1e1e" opacity="0.58"/><rect x="914.0" y="190.0" width="5.9" height="1.5" fill="#1e1e1e" opacity="0.58"/><rect x="920.6" y="190.0" width="2.8" height="1.5" fill="#1e1e1e" opacity="0.58"/><rect x="924.0" y="190.0" width="5.9" height="1.5" fill="#1e1e1e" opacity="0.58"/><rect x="930.6" y="190.0" width="5.0" height="1.5" fill="#1e1e1e" opacity="0.58"/><rect x="936.3" y="190.0" width="6.1" height="1.5" fill="#1e1e1e" opacity="0.58"/><rect x="943.1" y="190.0" width="4.4" height="1.5" fill="#1e1e1e" opacity="0.58"/><rect x="948.1" y="190.0" width="6.3" height="1.5" fill="#1e1e1e" opacity="0.58"/><rect x="955.1" y="190.0" width="6.5" height="1.5" fill="#1e1e1e" opacity="0.58"/><rect x="962.3" y="190.0" width="2.6" height="1.5" fill="#1e1e1e" opacity="0.58"/><rect x="965.5" y="190.0" width="2.8" height="1.5" fill="#1e1e1e" opacity="0.58"/><rect x="969.0" y="190.0" width="6.1" height="1.5" fill="#1e1e1e" opacity="0.58"/><rect x="975.8" y="190.0" width="7.7" height="1.5" fill="#1e1e1e" opacity="0.58"/><rect x="984.2" y="190.0" width="3.8" height="1.5" fill="#1e1e1e" opacity="0.58"/><rect x="988.7" y="190.0" width="4.9" height="1.5" fill="#1e1e1e" opacity="0.58"/><rect x="994.3" y="190.0" width="5.7" height="1.5" fill="#1e1e1e" opacity="0.58"/><rect x="1000.7" y="190.0" width="4.2" height="1.5" fill="#1e1e1e" opacity="0.58"/><rect x="1005.6" y="190.0" width="4.4" height="1.5" fill="#1e1e1e" opacity="0.58"/><rect x="1010.7" y="190.0" width="4.2" height="1.5" fill="#1e1e1e" opacity="0.58"/><rect x="1015.5" y="190.0" width="4.5" height="1.5" fill="#1e1e1e" opacity="0.58"/><rect x="1020.7" y="190.0" width="5.7" height="1.5" fill="#1e1e1e" opacity="0.58"/><rect x="1027.0" y="190.0" width="4.1" height="1.5" fill="#1e1e1e" opacity="0.58"/><rect x="1031.8" y="190.0" width="4.5" height="1.5" fill="#1e1e1e" opacity="0.58"/><rect x="914.0" y="193.2" width="6.6" height="1.5" fill="#1e1e1e" opacity="0.58"/><rect x="921.3" y="193.2" width="2.6" height="1.5" fill="#1e1e1e" opacity="0.58"/><rect x="924.6" y="193.2" width="5.5" height="1.5" fill="#1e1e1e" opacity="0.58"/><rect x="930.9" y="193.2" width="6.4" height="1.5" fill="#1e1e1e" opacity="0.58"/><rect x="938.0" y="193.2" width="4.1" height="1.5" fill="#1e1e1e" opacity="0.58"/><rect x="942.9" y="193.2" width="3.7" height="1.5" fill="#1e1e1e" opacity="0.58"/><rect x="947.2" y="193.2" width="6.8" height="1.5" fill="#1e1e1e" opacity="0.58"/><rect x="954.7" y="193.2" width="3.8" height="1.5" fill="#1e1e1e" opacity="0.58"/><rect x="959.2" y="193.2" width="3.5" height="1.5" fill="#1e1e1e" opacity="0.58"/><rect x="963.3" y="193.2" width="4.8" height="1.5" fill="#1e1e1e" opacity="0.58"/><rect x="968.9" y="193.2" width="6.2" height="1.5" fill="#1e1e1e" opacity="0.58"/><rect x="975.8" y="193.2" width="3.0" height="1.5" fill="#1e1e1e" opacity="0.58"/><rect x="979.5" y="193.2" width="4.2" height="1.5" fill="#1e1e1e" opacity="0.58"/><rect x="984.4" y="193.2" width="4.3" height="1.5" fill="#1e1e1e" opacity="0.58"/><rect x="989.4" y="193.2" width="7.0" height="1.5" fill="#1e1e1e" opacity="0.58"/><rect x="997.0" y="193.2" width="4.8" height="1.5" fill="#1e1e1e" opacity="0.58"/><rect x="914.0" y="200.0" width="7.1" height="1.5" fill="#1e1e1e" opacity="0.58"/><rect x="921.8" y="200.0" width="3.4" height="1.5" fill="#1e1e1e" opacity="0.58"/><rect x="925.9" y="200.0" width="4.3" height="1.5" fill="#1e1e1e" opacity="0.58"/><rect x="930.9" y="200.0" width="6.0" height="1.5" fill="#1e1e1e" opacity="0.58"/><rect x="937.7" y="200.0" width="7.3" height="1.5" fill="#1e1e1e" opacity="0.58"/><rect x="945.7" y="200.0" width="4.9" height="1.5" fill="#1e1e1e" opacity="0.58"/><rect x="951.3" y="200.0" width="3.7" height="1.5" fill="#1e1e1e" opacity="0.58"/><rect x="955.7" y="200.0" width="3.1" height="1.5" fill="#1e1e1e" opacity="0.58"/><rect x="959.5" y="200.0" width="5.4" height="1.5" fill="#1e1e1e" opacity="0.58"/><rect x="965.6" y="200.0" width="3.5" height="1.5" fill="#1e1e1e" opacity="0.58"/><rect x="969.8" y="200.0" width="6.9" height="1.5" fill="#1e1e1e" opacity="0.58"/><rect x="977.4" y="200.0" width="7.1" height="1.5" fill="#1e1e1e" opacity="0.58"/><rect x="985.1" y="200.0" width="3.5" height="1.5" fill="#1e1e1e" opacity="0.58"/><rect x="989.3" y="200.0" width="4.0" height="1.5" fill="#1e1e1e" opacity="0.58"/><rect x="994.0" y="200.0" width="6.9" height="1.5" fill="#1e1e1e" opacity="0.58"/><rect x="1001.6" y="200.0" width="6.0" height="1.5" fill="#1e1e1e" opacity="0.58"/><rect x="1008.2" y="200.0" width="6.9" height="1.5" fill="#1e1e1e" opacity="0.58"/><rect x="1015.8" y="200.0" width="4.4" height="1.5" fill="#1e1e1e" opacity="0.58"/><rect x="1020.9" y="200.0" width="3.2" height="1.5" fill="#1e1e1e" opacity="0.58"/><rect x="1024.7" y="200.0" width="4.1" height="1.5" fill="#1e1e1e" opacity="0.58"/><rect x="1029.5" y="200.0" width="6.8" height="1.5" fill="#1e1e1e" opacity="0.58"/><rect x="914.0" y="203.2" width="3.9" height="1.5" fill="#1e1e1e" opacity="0.58"/><rect x="918.6" y="203.2" width="4.3" height="1.5" fill="#1e1e1e" opacity="0.58"/><rect x="923.5" y="203.2" width="4.7" height="1.5" fill="#1e1e1e" opacity="0.58"/><rect x="928.9" y="203.2" width="4.7" height="1.5" fill="#1e1e1e" opacity="0.58"/><rect x="934.2" y="203.2" width="4.6" height="1.5" fill="#1e1e1e" opacity="0.58"/><rect x="939.5" y="203.2" width="7.4" height="1.5" fill="#1e1e1e" opacity="0.58"/><rect x="947.6" y="203.2" width="3.3" height="1.5" fill="#1e1e1e" opacity="0.58"/><rect x="951.5" y="203.2" width="2.5" height="1.5" fill="#1e1e1e" opacity="0.58"/><rect x="954.7" y="203.2" width="7.5" height="1.5" fill="#1e1e1e" opacity="0.58"/><rect x="962.8" y="203.2" width="7.1" height="1.5" fill="#1e1e1e" opacity="0.58"/><rect x="970.7" y="203.2" width="7.7" height="1.5" fill="#1e1e1e" opacity="0.58"/><rect x="979.1" y="203.2" width="4.8" height="1.5" fill="#1e1e1e" opacity="0.58"/><rect x="984.5" y="203.2" width="7.5" height="1.5" fill="#1e1e1e" opacity="0.58"/><rect x="992.7" y="203.2" width="7.4" height="1.5" fill="#1e1e1e" opacity="0.58"/><rect x="1000.8" y="203.2" width="3.6" height="1.5" fill="#1e1e1e" opacity="0.58"/><rect x="1005.1" y="203.2" width="6.4" height="1.5" fill="#1e1e1e" opacity="0.58"/><rect x="1012.2" y="203.2" width="6.9" height="1.5" fill="#1e1e1e" opacity="0.58"/><rect x="1019.8" y="203.2" width="6.0" height="1.5" fill="#1e1e1e" opacity="0.58"/><rect x="1026.4" y="203.2" width="5.2" height="1.5" fill="#1e1e1e" opacity="0.58"/><rect x="1032.3" y="203.2" width="4.0" height="1.5" fill="#1e1e1e" opacity="0.58"/><rect x="914.0" y="206.4" width="4.3" height="1.5" fill="#1e1e1e" opacity="0.58"/><rect x="919.0" y="206.4" width="3.7" height="1.5" fill="#1e1e1e" opacity="0.58"/><rect x="923.4" y="206.4" width="2.8" height="1.5" fill="#1e1e1e" opacity="0.58"/><rect x="926.9" y="206.4" width="5.6" height="1.5" fill="#1e1e1e" opacity="0.58"/><rect x="933.2" y="206.4" width="4.0" height="1.5" fill="#1e1e1e" opacity="0.58"/><rect x="937.9" y="206.4" width="6.8" height="1.5" fill="#1e1e1e" opacity="0.58"/><rect x="945.4" y="206.4" width="2.7" height="1.5" fill="#1e1e1e" opacity="0.58"/><rect x="948.8" y="206.4" width="7.3" height="1.5" fill="#1e1e1e" opacity="0.58"/><rect x="956.8" y="206.4" width="6.2" height="1.5" fill="#1e1e1e" opacity="0.58"/><rect x="963.7" y="206.4" width="7.4" height="1.5" fill="#1e1e1e" opacity="0.58"/><rect x="971.8" y="206.4" width="7.3" height="1.5" fill="#1e1e1e" opacity="0.58"/><rect x="979.8" y="206.4" width="7.3" height="1.5" fill="#1e1e1e" opacity="0.58"/><rect x="914.0" y="213.0" width="5.6" height="1.5" fill="#1e1e1e" opacity="0.58"/><rect x="920.3" y="213.0" width="2.5" height="1.5" fill="#1e1e1e" opacity="0.58"/><rect x="923.5" y="213.0" width="6.5" height="1.5" fill="#1e1e1e" opacity="0.58"/><rect x="930.7" y="213.0" width="3.4" height="1.5" fill="#1e1e1e" opacity="0.58"/><rect x="934.7" y="213.0" width="4.1" height="1.5" fill="#1e1e1e" opacity="0.58"/><rect x="939.5" y="213.0" width="6.0" height="1.5" fill="#1e1e1e" opacity="0.58"/><rect x="946.2" y="213.0" width="5.3" height="1.5" fill="#1e1e1e" opacity="0.58"/><rect x="952.2" y="213.0" width="4.7" height="1.5" fill="#1e1e1e" opacity="0.58"/><rect x="957.6" y="213.0" width="7.5" height="1.5" fill="#1e1e1e" opacity="0.58"/><rect x="965.8" y="213.0" width="5.8" height="1.5" fill="#1e1e1e" opacity="0.58"/><rect x="972.3" y="213.0" width="4.3" height="1.5" fill="#1e1e1e" opacity="0.58"/><rect x="977.2" y="213.0" width="3.8" height="1.5" fill="#1e1e1e" opacity="0.58"/><rect x="981.8" y="213.0" width="7.1" height="1.5" fill="#1e1e1e" opacity="0.58"/><rect x="989.6" y="213.0" width="5.0" height="1.5" fill="#1e1e1e" opacity="0.58"/><rect x="995.3" y="213.0" width="6.7" height="1.5" fill="#1e1e1e" opacity="0.58"/><rect x="1002.7" y="213.0" width="4.4" height="1.5" fill="#1e1e1e" opacity="0.58"/><rect x="1007.7" y="213.0" width="3.5" height="1.5" fill="#1e1e1e" opacity="0.58"/><rect x="1011.9" y="213.0" width="5.3" height="1.5" fill="#1e1e1e" opacity="0.58"/><rect x="1017.9" y="213.0" width="6.9" height="1.5" fill="#1e1e1e" opacity="0.58"/><rect x="1025.5" y="213.0" width="3.4" height="1.5" fill="#1e1e1e" opacity="0.58"/><rect x="1029.6" y="213.0" width="6.7" height="1.5" fill="#1e1e1e" opacity="0.58"/><rect x="914.0" y="216.2" width="7.5" height="1.5" fill="#1e1e1e" opacity="0.58"/><rect x="922.2" y="216.2" width="6.9" height="1.5" fill="#1e1e1e" opacity="0.58"/><rect x="929.9" y="216.2" width="7.0" height="1.5" fill="#1e1e1e" opacity="0.58"/><rect x="937.6" y="216.2" width="2.5" height="1.5" fill="#1e1e1e" opacity="0.58"/><rect x="940.8" y="216.2" width="5.9" height="1.5" fill="#1e1e1e" opacity="0.58"/><rect x="947.4" y="216.2" width="7.2" height="1.5" fill="#1e1e1e" opacity="0.58"/><rect x="955.3" y="216.2" width="2.8" height="1.5" fill="#1e1e1e" opacity="0.58"/><rect x="958.8" y="216.2" width="4.0" height="1.5" fill="#1e1e1e" opacity="0.58"/><rect x="963.5" y="216.2" width="4.0" height="1.5" fill="#1e1e1e" opacity="0.58"/><rect x="968.2" y="216.2" width="5.4" height="1.5" fill="#1e1e1e" opacity="0.58"/><rect x="974.2" y="216.2" width="4.8" height="1.5" fill="#1e1e1e" opacity="0.58"/><rect x="979.7" y="216.2" width="5.1" height="1.5" fill="#1e1e1e" opacity="0.58"/><rect x="985.5" y="216.2" width="6.7" height="1.5" fill="#1e1e1e" opacity="0.58"/><rect x="993.0" y="216.2" width="2.5" height="1.5" fill="#1e1e1e" opacity="0.58"/><rect x="996.2" y="216.2" width="2.8" height="1.5" fill="#1e1e1e" opacity="0.58"/><rect x="999.7" y="216.2" width="3.2" height="1.5" fill="#1e1e1e" opacity="0.58"/><rect x="1003.5" y="216.2" width="3.2" height="1.5" fill="#1e1e1e" opacity="0.58"/><rect x="1007.4" y="216.2" width="2.9" height="1.5" fill="#1e1e1e" opacity="0.58"/><rect x="1011.0" y="216.2" width="7.8" height="1.5" fill="#1e1e1e" opacity="0.58"/><rect x="1019.5" y="216.2" width="7.2" height="1.5" fill="#1e1e1e" opacity="0.58"/><rect x="1027.4" y="216.2" width="3.0" height="1.5" fill="#1e1e1e" opacity="0.58"/><rect x="1031.1" y="216.2" width="5.2" height="1.5" fill="#1e1e1e" opacity="0.58"/><rect x="914.0" y="219.4" width="4.1" height="1.5" fill="#1e1e1e" opacity="0.58"/><rect x="918.7" y="219.4" width="4.0" height="1.5" fill="#1e1e1e" opacity="0.58"/><rect x="923.4" y="219.4" width="4.2" height="1.5" fill="#1e1e1e" opacity="0.58"/><rect x="928.3" y="219.4" width="5.8" height="1.5" fill="#1e1e1e" opacity="0.58"/><rect x="934.8" y="219.4" width="5.5" height="1.5" fill="#1e1e1e" opacity="0.58"/><rect x="941.0" y="219.4" width="4.3" height="1.5" fill="#1e1e1e" opacity="0.58"/><rect x="945.9" y="219.4" width="3.4" height="1.5" fill="#1e1e1e" opacity="0.58"/><rect x="950.0" y="219.4" width="4.1" height="1.5" fill="#1e1e1e" opacity="0.58"/><rect x="954.8" y="219.4" width="3.0" height="1.5" fill="#1e1e1e" opacity="0.58"/><rect x="958.5" y="219.4" width="5.3" height="1.5" fill="#1e1e1e" opacity="0.58"/><rect x="964.5" y="219.4" width="6.2" height="1.5" fill="#1e1e1e" opacity="0.58"/><rect x="971.3" y="219.4" width="4.4" height="1.5" fill="#1e1e1e" opacity="0.58"/><rect x="976.4" y="219.4" width="2.8" height="1.5" fill="#1e1e1e" opacity="0.58"/><rect x="979.9" y="219.4" width="3.3" height="1.5" fill="#1e1e1e" opacity="0.58"/><rect x="983.9" y="219.4" width="4.4" height="1.5" fill="#1e1e1e" opacity="0.58"/><rect x="988.9" y="219.4" width="5.6" height="1.5" fill="#1e1e1e" opacity="0.58"/><rect x="995.1" y="219.4" width="6.5" height="1.5" fill="#1e1e1e" opacity="0.58"/><rect x="1002.3" y="219.4" width="4.4" height="1.5" fill="#1e1e1e" opacity="0.58"/><rect x="1007.4" y="219.4" width="6.6" height="1.5" fill="#1e1e1e" opacity="0.58"/><rect x="1014.6" y="219.4" width="5.7" height="1.5" fill="#1e1e1e" opacity="0.58"/><rect x="1021.0" y="219.4" width="4.7" height="1.5" fill="#1e1e1e" opacity="0.58"/><rect x="1026.3" y="219.4" width="4.4" height="1.5" fill="#1e1e1e" opacity="0.58"/><rect x="1031.3" y="219.4" width="5.0" height="1.5" fill="#1e1e1e" opacity="0.58"/><rect x="914.0" y="222.6" width="6.3" height="1.5" fill="#1e1e1e" opacity="0.58"/><rect x="921.0" y="222.6" width="4.8" height="1.5" fill="#1e1e1e" opacity="0.58"/><rect x="926.5" y="222.6" width="6.3" height="1.5" fill="#1e1e1e" opacity="0.58"/><rect x="933.5" y="222.6" width="5.0" height="1.5" fill="#1e1e1e" opacity="0.58"/><rect x="939.2" y="222.6" width="3.8" height="1.5" fill="#1e1e1e" opacity="0.58"/><rect x="943.7" y="222.6" width="5.4" height="1.5" fill="#1e1e1e" opacity="0.58"/><rect x="949.8" y="222.6" width="6.3" height="1.5" fill="#1e1e1e" opacity="0.58"/><rect x="956.8" y="222.6" width="2.9" height="1.5" fill="#1e1e1e" opacity="0.58"/><rect x="960.3" y="222.6" width="4.8" height="1.5" fill="#1e1e1e" opacity="0.58"/><rect x="965.8" y="222.6" width="4.8" height="1.5" fill="#1e1e1e" opacity="0.58"/><rect x="971.3" y="222.6" width="7.3" height="1.5" fill="#1e1e1e" opacity="0.58"/><rect x="979.3" y="222.6" width="7.6" height="1.5" fill="#1e1e1e" opacity="0.58"/><rect x="987.6" y="222.6" width="4.5" height="1.5" fill="#1e1e1e" opacity="0.58"/><rect x="992.8" y="222.6" width="7.4" height="1.5" fill="#1e1e1e" opacity="0.58"/><rect x="1000.9" y="222.6" width="6.8" height="1.5" fill="#1e1e1e" opacity="0.58"/><rect x="1008.4" y="222.6" width="3.9" height="1.5" fill="#1e1e1e" opacity="0.58"/><rect x="1013.0" y="222.6" width="5.0" height="1.5" fill="#1e1e1e" opacity="0.58"/><rect x="1018.7" y="222.6" width="3.2" height="1.5" fill="#1e1e1e" opacity="0.58"/><rect x="1022.6" y="222.6" width="6.9" height="1.5" fill="#1e1e1e" opacity="0.58"/><rect x="1030.2" y="222.6" width="6.1" height="1.5" fill="#1e1e1e" opacity="0.58"/><rect x="914.0" y="225.8" width="7.0" height="1.5" fill="#1e1e1e" opacity="0.58"/><rect x="921.6" y="225.8" width="6.5" height="1.5" fill="#1e1e1e" opacity="0.58"/><rect x="928.8" y="225.8" width="5.8" height="1.5" fill="#1e1e1e" opacity="0.58"/><rect x="935.3" y="225.8" width="6.2" height="1.5" fill="#1e1e1e" opacity="0.58"/><rect x="942.1" y="225.8" width="5.3" height="1.5" fill="#1e1e1e" opacity="0.58"/><rect x="948.1" y="225.8" width="2.9" height="1.5" fill="#1e1e1e" opacity="0.58"/><rect x="951.7" y="225.8" width="5.4" height="1.5" fill="#1e1e1e" opacity="0.58"/><rect x="957.7" y="225.8" width="2.4" height="1.5" fill="#1e1e1e" opacity="0.58"/><rect x="960.8" y="225.8" width="3.1" height="1.5" fill="#1e1e1e" opacity="0.58"/><rect x="964.6" y="225.8" width="6.4" height="1.5" fill="#1e1e1e" opacity="0.58"/><rect x="971.6" y="225.8" width="2.6" height="1.5" fill="#1e1e1e" opacity="0.58"/><rect x="974.9" y="225.8" width="2.8" height="1.5" fill="#1e1e1e" opacity="0.58"/><rect x="978.4" y="225.8" width="2.9" height="1.5" fill="#1e1e1e" opacity="0.58"/><rect x="981.9" y="225.8" width="6.9" height="1.5" fill="#1e1e1e" opacity="0.58"/><rect x="989.5" y="225.8" width="3.3" height="1.5" fill="#1e1e1e" opacity="0.58"/><rect x="993.5" y="225.8" width="2.5" height="1.5" fill="#1e1e1e" opacity="0.58"/><rect x="996.6" y="225.8" width="6.7" height="1.5" fill="#1e1e1e" opacity="0.58"/><rect x="1004.0" y="225.8" width="3.0" height="1.5" fill="#1e1e1e" opacity="0.58"/><rect x="1007.7" y="225.8" width="6.8" height="1.5" fill="#1e1e1e" opacity="0.58"/><rect x="1015.1" y="225.8" width="5.9" height="1.5" fill="#1e1e1e" opacity="0.58"/><rect x="1021.6" y="225.8" width="6.7" height="1.5" fill="#1e1e1e" opacity="0.58"/><rect x="1029.0" y="225.8" width="7.3" height="1.5" fill="#1e1e1e" opacity="0.58"/><rect x="914.0" y="229.0" width="5.7" height="1.5" fill="#1e1e1e" opacity="0.58"/><rect x="920.4" y="229.0" width="6.9" height="1.5" fill="#1e1e1e" opacity="0.58"/><rect x="928.0" y="229.0" width="2.7" height="1.5" fill="#1e1e1e" opacity="0.58"/><rect x="931.4" y="229.0" width="6.7" height="1.5" fill="#1e1e1e" opacity="0.58"/><rect x="938.8" y="229.0" width="5.3" height="1.5" fill="#1e1e1e" opacity="0.58"/><rect x="944.8" y="229.0" width="6.4" height="1.5" fill="#1e1e1e" opacity="0.58"/><rect x="951.9" y="229.0" width="3.1" height="1.5" fill="#1e1e1e" opacity="0.58"/><rect x="955.7" y="229.0" width="6.6" height="1.5" fill="#1e1e1e" opacity="0.58"/><rect x="963.0" y="229.0" width="7.6" height="1.5" fill="#1e1e1e" opacity="0.58"/><rect x="971.3" y="229.0" width="2.8" height="1.5" fill="#1e1e1e" opacity="0.58"/><rect x="974.8" y="229.0" width="4.3" height="1.5" fill="#1e1e1e" opacity="0.58"/><rect x="979.8" y="229.0" width="5.6" height="1.5" fill="#1e1e1e" opacity="0.58"/><rect x="986.1" y="229.0" width="7.0" height="1.5" fill="#1e1e1e" opacity="0.58"/><rect x="993.9" y="229.0" width="3.8" height="1.5" fill="#1e1e1e" opacity="0.58"/><rect x="998.4" y="229.0" width="3.5" height="1.5" fill="#1e1e1e" opacity="0.58"/><rect x="1002.6" y="229.0" width="3.9" height="1.5" fill="#1e1e1e" opacity="0.58"/><rect x="1007.1" y="229.0" width="5.9" height="1.5" fill="#1e1e1e" opacity="0.58"/><rect x="1013.7" y="229.0" width="6.6" height="1.5" fill="#1e1e1e" opacity="0.58"/><rect x="1021.1" y="229.0" width="4.7" height="1.5" fill="#1e1e1e" opacity="0.58"/><rect x="1026.4" y="229.0" width="4.5" height="1.5" fill="#1e1e1e" opacity="0.58"/><rect x="1031.6" y="229.0" width="4.7" height="1.5" fill="#1e1e1e" opacity="0.58"/><rect x="914.0" y="232.2" width="4.2" height="1.5" fill="#1e1e1e" opacity="0.58"/><rect x="918.8" y="232.2" width="4.5" height="1.5" fill="#1e1e1e" opacity="0.58"/><rect x="924.0" y="232.2" width="2.8" height="1.5" fill="#1e1e1e" opacity="0.58"/><rect x="927.5" y="232.2" width="5.0" height="1.5" fill="#1e1e1e" opacity="0.58"/><rect x="933.1" y="232.2" width="7.4" height="1.5" fill="#1e1e1e" opacity="0.58"/><rect x="941.2" y="232.2" width="4.5" height="1.5" fill="#1e1e1e" opacity="0.58"/><rect x="946.4" y="232.2" width="6.2" height="1.5" fill="#1e1e1e" opacity="0.58"/><rect x="953.3" y="232.2" width="3.2" height="1.5" fill="#1e1e1e" opacity="0.58"/><rect x="957.2" y="232.2" width="6.0" height="1.5" fill="#1e1e1e" opacity="0.58"/><rect x="963.8" y="232.2" width="6.3" height="1.5" fill="#1e1e1e" opacity="0.58"/><rect x="970.7" y="232.2" width="5.9" height="1.5" fill="#1e1e1e" opacity="0.58"/><rect x="977.3" y="232.2" width="5.1" height="1.5" fill="#1e1e1e" opacity="0.58"/><rect x="983.0" y="232.2" width="4.9" height="1.5" fill="#1e1e1e" opacity="0.58"/><rect x="988.5" y="232.2" width="5.7" height="1.5" fill="#1e1e1e" opacity="0.58"/><rect x="994.9" y="232.2" width="7.0" height="1.5" fill="#1e1e1e" opacity="0.58"/><rect x="914.0" y="239.5" width="3.2" height="1.5" fill="#1e1e1e" opacity="0.58"/><rect x="917.9" y="239.5" width="2.9" height="1.5" fill="#1e1e1e" opacity="0.58"/><rect x="921.5" y="239.5" width="6.4" height="1.5" fill="#1e1e1e" opacity="0.58"/><rect x="928.5" y="239.5" width="7.3" height="1.5" fill="#1e1e1e" opacity="0.58"/><rect x="936.5" y="239.5" width="5.2" height="1.5" fill="#1e1e1e" opacity="0.58"/><rect x="942.3" y="239.5" width="4.8" height="1.5" fill="#1e1e1e" opacity="0.58"/><rect x="947.8" y="239.5" width="6.2" height="1.5" fill="#1e1e1e" opacity="0.58"/><rect x="954.7" y="239.5" width="3.4" height="1.5" fill="#1e1e1e" opacity="0.58"/><rect x="958.8" y="239.5" width="3.8" height="1.5" fill="#1e1e1e" opacity="0.58"/><rect x="963.3" y="239.5" width="3.5" height="1.5" fill="#1e1e1e" opacity="0.58"/><rect x="967.4" y="239.5" width="5.5" height="1.5" fill="#1e1e1e" opacity="0.58"/><rect x="973.6" y="239.5" width="4.1" height="1.5" fill="#1e1e1e" opacity="0.58"/><rect x="978.4" y="239.5" width="3.6" height="1.5" fill="#1e1e1e" opacity="0.58"/><rect x="982.7" y="239.5" width="6.1" height="1.5" fill="#1e1e1e" opacity="0.58"/><rect x="989.5" y="239.5" width="7.5" height="1.5" fill="#1e1e1e" opacity="0.58"/><rect x="997.6" y="239.5" width="4.0" height="1.5" fill="#1e1e1e" opacity="0.58"/><rect x="1002.3" y="239.5" width="6.2" height="1.5" fill="#1e1e1e" opacity="0.58"/><rect x="1009.1" y="239.5" width="4.6" height="1.5" fill="#1e1e1e" opacity="0.58"/><rect x="1014.4" y="239.5" width="6.9" height="1.5" fill="#1e1e1e" opacity="0.58"/><rect x="1022.0" y="239.5" width="5.5" height="1.5" fill="#1e1e1e" opacity="0.58"/><rect x="1028.2" y="239.5" width="3.8" height="1.5" fill="#1e1e1e" opacity="0.58"/><rect x="1032.8" y="239.5" width="3.6" height="1.5" fill="#1e1e1e" opacity="0.58"/><rect x="914.0" y="242.7" width="2.5" height="1.5" fill="#1e1e1e" opacity="0.58"/><rect x="917.1" y="242.7" width="4.8" height="1.5" fill="#1e1e1e" opacity="0.58"/><rect x="922.6" y="242.7" width="4.3" height="1.5" fill="#1e1e1e" opacity="0.58"/><rect x="927.6" y="242.7" width="3.2" height="1.5" fill="#1e1e1e" opacity="0.58"/><rect x="931.5" y="242.7" width="4.2" height="1.5" fill="#1e1e1e" opacity="0.58"/><rect x="936.4" y="242.7" width="4.0" height="1.5" fill="#1e1e1e" opacity="0.58"/><rect x="941.1" y="242.7" width="6.4" height="1.5" fill="#1e1e1e" opacity="0.58"/><rect x="948.1" y="242.7" width="3.1" height="1.5" fill="#1e1e1e" opacity="0.58"/><rect x="951.8" y="242.7" width="7.5" height="1.5" fill="#1e1e1e" opacity="0.58"/><rect x="960.0" y="242.7" width="4.8" height="1.5" fill="#1e1e1e" opacity="0.58"/><rect x="965.4" y="242.7" width="5.4" height="1.5" fill="#1e1e1e" opacity="0.58"/><rect x="971.6" y="242.7" width="4.8" height="1.5" fill="#1e1e1e" opacity="0.58"/><rect x="977.0" y="242.7" width="6.7" height="1.5" fill="#1e1e1e" opacity="0.58"/><rect x="984.3" y="242.7" width="6.6" height="1.5" fill="#1e1e1e" opacity="0.58"/><rect x="991.6" y="242.7" width="5.2" height="1.5" fill="#1e1e1e" opacity="0.58"/><rect x="997.5" y="242.7" width="4.8" height="1.5" fill="#1e1e1e" opacity="0.58"/><rect x="1003.0" y="242.7" width="6.1" height="1.5" fill="#1e1e1e" opacity="0.58"/><rect x="1009.7" y="242.7" width="6.8" height="1.5" fill="#1e1e1e" opacity="0.58"/><rect x="1017.1" y="242.7" width="4.4" height="1.5" fill="#1e1e1e" opacity="0.58"/><rect x="1022.2" y="242.7" width="6.1" height="1.5" fill="#1e1e1e" opacity="0.58"/><rect x="1029.0" y="242.7" width="7.3" height="1.5" fill="#1e1e1e" opacity="0.58"/><rect x="914.0" y="245.9" width="4.8" height="1.5" fill="#1e1e1e" opacity="0.58"/><rect x="919.5" y="245.9" width="3.6" height="1.5" fill="#1e1e1e" opacity="0.58"/><rect x="923.7" y="245.9" width="3.6" height="1.5" fill="#1e1e1e" opacity="0.58"/><rect x="928.0" y="245.9" width="6.1" height="1.5" fill="#1e1e1e" opacity="0.58"/><rect x="934.8" y="245.9" width="5.9" height="1.5" fill="#1e1e1e" opacity="0.58"/><rect x="941.3" y="245.9" width="7.4" height="1.5" fill="#1e1e1e" opacity="0.58"/><rect x="949.4" y="245.9" width="6.8" height="1.5" fill="#1e1e1e" opacity="0.58"/><rect x="956.8" y="245.9" width="3.6" height="1.5" fill="#1e1e1e" opacity="0.58"/><rect x="961.1" y="245.9" width="3.4" height="1.5" fill="#1e1e1e" opacity="0.58"/><rect x="965.2" y="245.9" width="3.7" height="1.5" fill="#1e1e1e" opacity="0.58"/><rect x="969.6" y="245.9" width="3.3" height="1.5" fill="#1e1e1e" opacity="0.58"/><rect x="973.6" y="245.9" width="6.0" height="1.5" fill="#1e1e1e" opacity="0.58"/><rect x="980.3" y="245.9" width="6.9" height="1.5" fill="#1e1e1e" opacity="0.58"/><rect x="914.0" y="252.0" width="7.2" height="1.5" fill="#1e1e1e" opacity="0.58"/><rect x="921.9" y="252.0" width="3.8" height="1.5" fill="#1e1e1e" opacity="0.58"/><rect x="926.3" y="252.0" width="7.0" height="1.5" fill="#1e1e1e" opacity="0.58"/><rect x="934.0" y="252.0" width="4.1" height="1.5" fill="#1e1e1e" opacity="0.58"/><rect x="938.8" y="252.0" width="4.7" height="1.5" fill="#1e1e1e" opacity="0.58"/><rect x="944.1" y="252.0" width="6.3" height="1.5" fill="#1e1e1e" opacity="0.58"/><rect x="951.1" y="252.0" width="2.9" height="1.5" fill="#1e1e1e" opacity="0.58"/><rect x="954.6" y="252.0" width="2.9" height="1.5" fill="#1e1e1e" opacity="0.58"/><rect x="958.2" y="252.0" width="6.8" height="1.5" fill="#1e1e1e" opacity="0.58"/><rect x="965.7" y="252.0" width="4.0" height="1.5" fill="#1e1e1e" opacity="0.58"/><rect x="970.4" y="252.0" width="4.3" height="1.5" fill="#1e1e1e" opacity="0.58"/><rect x="975.3" y="252.0" width="5.5" height="1.5" fill="#1e1e1e" opacity="0.58"/><rect x="981.5" y="252.0" width="6.0" height="1.5" fill="#1e1e1e" opacity="0.58"/><rect x="988.2" y="252.0" width="2.5" height="1.5" fill="#1e1e1e" opacity="0.58"/><rect x="991.3" y="252.0" width="4.2" height="1.5" fill="#1e1e1e" opacity="0.58"/><rect x="996.2" y="252.0" width="4.7" height="1.5" fill="#1e1e1e" opacity="0.58"/><rect x="1001.6" y="252.0" width="5.0" height="1.5" fill="#1e1e1e" opacity="0.58"/><rect x="1007.3" y="252.0" width="3.5" height="1.5" fill="#1e1e1e" opacity="0.58"/><rect x="1011.5" y="252.0" width="5.5" height="1.5" fill="#1e1e1e" opacity="0.58"/><rect x="1017.7" y="252.0" width="7.5" height="1.5" fill="#1e1e1e" opacity="0.58"/><rect x="1025.8" y="252.0" width="4.5" height="1.5" fill="#1e1e1e" opacity="0.58"/><rect x="1031.0" y="252.0" width="5.3" height="1.5" fill="#1e1e1e" opacity="0.58"/><rect x="914.0" y="255.2" width="3.0" height="1.5" fill="#1e1e1e" opacity="0.58"/><rect x="917.7" y="255.2" width="3.9" height="1.5" fill="#1e1e1e" opacity="0.58"/><rect x="922.3" y="255.2" width="5.9" height="1.5" fill="#1e1e1e" opacity="0.58"/><rect x="928.9" y="255.2" width="3.0" height="1.5" fill="#1e1e1e" opacity="0.58"/><rect x="932.6" y="255.2" width="7.1" height="1.5" fill="#1e1e1e" opacity="0.58"/><rect x="940.4" y="255.2" width="7.2" height="1.5" fill="#1e1e1e" opacity="0.58"/><rect x="948.3" y="255.2" width="2.9" height="1.5" fill="#1e1e1e" opacity="0.58"/><rect x="951.9" y="255.2" width="7.4" height="1.5" fill="#1e1e1e" opacity="0.58"/><rect x="960.0" y="255.2" width="4.4" height="1.5" fill="#1e1e1e" opacity="0.58"/><rect x="965.1" y="255.2" width="6.5" height="1.5" fill="#1e1e1e" opacity="0.58"/><rect x="972.2" y="255.2" width="6.4" height="1.5" fill="#1e1e1e" opacity="0.58"/><rect x="979.4" y="255.2" width="4.0" height="1.5" fill="#1e1e1e" opacity="0.58"/><rect x="984.0" y="255.2" width="6.0" height="1.5" fill="#1e1e1e" opacity="0.58"/><rect x="990.7" y="255.2" width="5.9" height="1.5" fill="#1e1e1e" opacity="0.58"/><rect x="997.3" y="255.2" width="6.7" height="1.5" fill="#1e1e1e" opacity="0.58"/><rect x="1004.6" y="255.2" width="3.8" height="1.5" fill="#1e1e1e" opacity="0.58"/><rect x="1009.1" y="255.2" width="6.4" height="1.5" fill="#1e1e1e" opacity="0.58"/><rect x="1016.2" y="255.2" width="7.5" height="1.5" fill="#1e1e1e" opacity="0.58"/><rect x="1024.4" y="255.2" width="6.0" height="1.5" fill="#1e1e1e" opacity="0.58"/><rect x="1031.1" y="255.2" width="5.3" height="1.5" fill="#1e1e1e" opacity="0.58"/><rect x="914.0" y="258.4" width="3.1" height="1.5" fill="#1e1e1e" opacity="0.58"/><rect x="917.7" y="258.4" width="5.1" height="1.5" fill="#1e1e1e" opacity="0.58"/><rect x="923.5" y="258.4" width="4.3" height="1.5" fill="#1e1e1e" opacity="0.58"/><rect x="928.6" y="258.4" width="6.3" height="1.5" fill="#1e1e1e" opacity="0.58"/><rect x="935.6" y="258.4" width="6.1" height="1.5" fill="#1e1e1e" opacity="0.58"/><rect x="942.4" y="258.4" width="5.5" height="1.5" fill="#1e1e1e" opacity="0.58"/><rect x="948.6" y="258.4" width="3.4" height="1.5" fill="#1e1e1e" opacity="0.58"/><rect x="952.7" y="258.4" width="5.9" height="1.5" fill="#1e1e1e" opacity="0.58"/><rect x="959.3" y="258.4" width="5.8" height="1.5" fill="#1e1e1e" opacity="0.58"/><rect x="965.8" y="258.4" width="3.4" height="1.5" fill="#1e1e1e" opacity="0.58"/><rect x="969.9" y="258.4" width="7.2" height="1.5" fill="#1e1e1e" opacity="0.58"/><rect x="977.8" y="258.4" width="6.0" height="1.5" fill="#1e1e1e" opacity="0.58"/><rect x="984.5" y="258.4" width="3.1" height="1.5" fill="#1e1e1e" opacity="0.58"/><rect x="988.3" y="258.4" width="7.5" height="1.5" fill="#1e1e1e" opacity="0.58"/><rect x="996.5" y="258.4" width="3.2" height="1.5" fill="#1e1e1e" opacity="0.58"/><rect x="1000.4" y="258.4" width="4.2" height="1.5" fill="#1e1e1e" opacity="0.58"/><rect x="1005.3" y="258.4" width="6.3" height="1.5" fill="#1e1e1e" opacity="0.58"/><rect x="1012.3" y="258.4" width="5.7" height="1.5" fill="#1e1e1e" opacity="0.58"/><rect x="1018.7" y="258.4" width="5.4" height="1.5" fill="#1e1e1e" opacity="0.58"/><rect x="1024.8" y="258.4" width="5.9" height="1.5" fill="#1e1e1e" opacity="0.58"/><rect x="1031.4" y="258.4" width="4.9" height="1.5" fill="#1e1e1e" opacity="0.58"/><rect x="914.0" y="261.6" width="4.1" height="1.5" fill="#1e1e1e" opacity="0.58"/><rect x="918.7" y="261.6" width="3.4" height="1.5" fill="#1e1e1e" opacity="0.58"/><rect x="922.8" y="261.6" width="2.8" height="1.5" fill="#1e1e1e" opacity="0.58"/><rect x="926.2" y="261.6" width="6.2" height="1.5" fill="#1e1e1e" opacity="0.58"/><rect x="933.1" y="261.6" width="6.4" height="1.5" fill="#1e1e1e" opacity="0.58"/><rect x="940.2" y="261.6" width="5.3" height="1.5" fill="#1e1e1e" opacity="0.58"/><rect x="946.2" y="261.6" width="6.3" height="1.5" fill="#1e1e1e" opacity="0.58"/><rect x="953.2" y="261.6" width="4.3" height="1.5" fill="#1e1e1e" opacity="0.58"/><rect x="958.2" y="261.6" width="3.8" height="1.5" fill="#1e1e1e" opacity="0.58"/><rect x="962.7" y="261.6" width="4.5" height="1.5" fill="#1e1e1e" opacity="0.58"/><rect x="967.8" y="261.6" width="7.0" height="1.5" fill="#1e1e1e" opacity="0.58"/><rect x="975.6" y="261.6" width="2.6" height="1.5" fill="#1e1e1e" opacity="0.58"/><rect x="978.9" y="261.6" width="5.1" height="1.5" fill="#1e1e1e" opacity="0.58"/><rect x="984.7" y="261.6" width="3.7" height="1.5" fill="#1e1e1e" opacity="0.58"/><rect x="989.1" y="261.6" width="6.5" height="1.5" fill="#1e1e1e" opacity="0.58"/><rect x="996.2" y="261.6" width="4.3" height="1.5" fill="#1e1e1e" opacity="0.58"/><rect x="1001.2" y="261.6" width="4.2" height="1.5" fill="#1e1e1e" opacity="0.58"/><rect x="1006.1" y="261.6" width="4.6" height="1.5" fill="#1e1e1e" opacity="0.58"/><rect x="1011.3" y="261.6" width="5.3" height="1.5" fill="#1e1e1e" opacity="0.58"/><rect x="1017.3" y="261.6" width="6.5" height="1.5" fill="#1e1e1e" opacity="0.58"/><rect x="1024.4" y="261.6" width="4.3" height="1.5" fill="#1e1e1e" opacity="0.58"/><rect x="1029.4" y="261.6" width="6.9" height="1.5" fill="#1e1e1e" opacity="0.58"/><rect x="914.0" y="264.8" width="3.0" height="1.5" fill="#1e1e1e" opacity="0.58"/><rect x="917.7" y="264.8" width="3.9" height="1.5" fill="#1e1e1e" opacity="0.58"/><rect x="922.2" y="264.8" width="3.0" height="1.5" fill="#1e1e1e" opacity="0.58"/><rect x="925.9" y="264.8" width="3.0" height="1.5" fill="#1e1e1e" opacity="0.58"/><rect x="929.6" y="264.8" width="6.6" height="1.5" fill="#1e1e1e" opacity="0.58"/><rect x="936.8" y="264.8" width="6.3" height="1.5" fill="#1e1e1e" opacity="0.58"/><rect x="943.8" y="264.8" width="3.4" height="1.5" fill="#1e1e1e" opacity="0.58"/><rect x="947.9" y="264.8" width="3.4" height="1.5" fill="#1e1e1e" opacity="0.58"/><rect x="952.0" y="264.8" width="4.6" height="1.5" fill="#1e1e1e" opacity="0.58"/><rect x="957.3" y="264.8" width="6.4" height="1.5" fill="#1e1e1e" opacity="0.58"/><rect x="964.4" y="264.8" width="6.8" height="1.5" fill="#1e1e1e" opacity="0.58"/><rect x="971.8" y="264.8" width="6.4" height="1.5" fill="#1e1e1e" opacity="0.58"/><rect x="978.9" y="264.8" width="5.6" height="1.5" fill="#1e1e1e" opacity="0.58"/><rect x="985.2" y="264.8" width="3.2" height="1.5" fill="#1e1e1e" opacity="0.58"/><rect x="989.1" y="264.8" width="4.5" height="1.5" fill="#1e1e1e" opacity="0.58"/><rect x="994.3" y="264.8" width="3.5" height="1.5" fill="#1e1e1e" opacity="0.58"/><rect x="998.4" y="264.8" width="5.2" height="1.5" fill="#1e1e1e" opacity="0.58"/><rect x="1004.3" y="264.8" width="5.5" height="1.5" fill="#1e1e1e" opacity="0.58"/><rect x="1010.5" y="264.8" width="3.5" height="1.5" fill="#1e1e1e" opacity="0.58"/><rect x="1014.7" y="264.8" width="3.8" height="1.5" fill="#1e1e1e" opacity="0.58"/><rect x="1019.1" y="264.8" width="6.6" height="1.5" fill="#1e1e1e" opacity="0.58"/><rect x="1026.4" y="264.8" width="2.6" height="1.5" fill="#1e1e1e" opacity="0.58"/><rect x="1029.6" y="264.8" width="6.7" height="1.5" fill="#1e1e1e" opacity="0.58"/><rect x="914.0" y="268.0" width="7.3" height="1.5" fill="#1e1e1e" opacity="0.58"/><rect x="922.0" y="268.0" width="7.6" height="1.5" fill="#1e1e1e" opacity="0.58"/><rect x="930.4" y="268.0" width="4.6" height="1.5" fill="#1e1e1e" opacity="0.58"/><rect x="935.6" y="268.0" width="5.5" height="1.5" fill="#1e1e1e" opacity="0.58"/><rect x="941.8" y="268.0" width="5.6" height="1.5" fill="#1e1e1e" opacity="0.58"/><rect x="948.1" y="268.0" width="5.9" height="1.5" fill="#1e1e1e" opacity="0.58"/><rect x="954.7" y="268.0" width="7.8" height="1.5" fill="#1e1e1e" opacity="0.58"/><rect x="963.2" y="268.0" width="6.2" height="1.5" fill="#1e1e1e" opacity="0.58"/><rect x="970.1" y="268.0" width="4.1" height="1.5" fill="#1e1e1e" opacity="0.58"/><rect x="974.9" y="268.0" width="7.2" height="1.5" fill="#1e1e1e" opacity="0.58"/><rect x="982.8" y="268.0" width="5.1" height="1.5" fill="#1e1e1e" opacity="0.58"/><rect x="988.6" y="268.0" width="5.7" height="1.5" fill="#1e1e1e" opacity="0.58"/><rect x="995.0" y="268.0" width="6.4" height="1.5" fill="#1e1e1e" opacity="0.58"/><rect x="1002.1" y="268.0" width="2.5" height="1.5" fill="#1e1e1e" opacity="0.58"/><rect x="1005.3" y="268.0" width="6.7" height="1.5" fill="#1e1e1e" opacity="0.58"/><rect x="1012.7" y="268.0" width="6.1" height="1.5" fill="#1e1e1e" opacity="0.58"/><rect x="1019.5" y="268.0" width="5.2" height="1.5" fill="#1e1e1e" opacity="0.58"/><rect x="1025.3" y="268.0" width="5.3" height="1.5" fill="#1e1e1e" opacity="0.58"/><rect x="1031.3" y="268.0" width="5.0" height="1.5" fill="#1e1e1e" opacity="0.58"/><rect x="914.0" y="271.2" width="3.5" height="1.5" fill="#1e1e1e" opacity="0.58"/><rect x="918.2" y="271.2" width="5.3" height="1.5" fill="#1e1e1e" opacity="0.58"/><rect x="924.2" y="271.2" width="2.7" height="1.5" fill="#1e1e1e" opacity="0.58"/><rect x="927.6" y="271.2" width="5.2" height="1.5" fill="#1e1e1e" opacity="0.58"/><rect x="933.4" y="271.2" width="6.0" height="1.5" fill="#1e1e1e" opacity="0.58"/><rect x="940.1" y="271.2" width="4.9" height="1.5" fill="#1e1e1e" opacity="0.58"/><rect x="945.6" y="271.2" width="5.5" height="1.5" fill="#1e1e1e" opacity="0.58"/><rect x="951.9" y="271.2" width="7.7" height="1.5" fill="#1e1e1e" opacity="0.58"/><rect x="960.2" y="271.2" width="7.3" height="1.5" fill="#1e1e1e" opacity="0.58"/><rect x="968.2" y="271.2" width="3.2" height="1.5" fill="#1e1e1e" opacity="0.58"/><rect x="972.1" y="271.2" width="6.8" height="1.5" fill="#1e1e1e" opacity="0.58"/><rect x="979.5" y="271.2" width="5.8" height="1.5" fill="#1e1e1e" opacity="0.58"/><rect x="986.0" y="271.2" width="2.7" height="1.5" fill="#1e1e1e" opacity="0.58"/><rect x="989.5" y="271.2" width="4.4" height="1.5" fill="#1e1e1e" opacity="0.58"/><rect x="994.6" y="271.2" width="3.7" height="1.5" fill="#1e1e1e" opacity="0.58"/><rect x="999.0" y="271.2" width="2.9" height="1.5" fill="#1e1e1e" opacity="0.58"/><rect x="914.0" y="302.0" width="4.9" height="1.4" fill="#444" opacity="0.58"/><rect x="919.5" y="302.0" width="6.8" height="1.4" fill="#444" opacity="0.58"/><rect x="914.0" y="308.0" width="3.6" height="1.4" fill="#333" opacity="0.58"/><rect x="918.2" y="308.0" width="6.1" height="1.4" fill="#333" opacity="0.58"/><rect x="924.8" y="308.0" width="5.3" height="1.4" fill="#333" opacity="0.58"/><rect x="930.7" y="308.0" width="2.7" height="1.4" fill="#333" opacity="0.58"/><rect x="914.0" y="311.0" width="6.5" height="1.4" fill="#333" opacity="0.58"/><rect x="921.1" y="311.0" width="5.2" height="1.4" fill="#333" opacity="0.58"/><rect x="927.0" y="311.0" width="6.8" height="1.4" fill="#333" opacity="0.58"/><rect x="934.5" y="311.0" width="5.8" height="1.4" fill="#333" opacity="0.58"/><rect x="940.9" y="311.0" width="5.9" height="1.4" fill="#333" opacity="0.58"/><rect x="947.4" y="311.0" width="4.0" height="1.4" fill="#333" opacity="0.58"/><rect x="364" y="396" width="177.5" height="176.5" fill="#094f8b" /><use href="#logo" x="428" y="448" width="48" height="48"/><text x="402.5" y="512" font-family="Liberation Sans" font-weight="bold" font-size="12.5" fill="#efe6b0" stroke="#efe6b0" stroke-width="0.5" textLength="101" lengthAdjust="spacingAndGlyphs">THE GRAPHIC OWL</text><text x="403" y="519.5" font-family="Liberation Sans" font-weight="bold" font-size="5" fill="#7fb0f0" textLength="99" lengthAdjust="spacing">YOUR PERFECT DESTINATION</text><path d="M541.5 474.5 L522 485.5 L541.5 496 Z" fill="#f6b81c"/><circle cx="644.5" cy="485" r="84.3" fill="#094f8b"/><circle cx="644.5" cy="485.3" r="17.8" fill="#ffffff"/><use href="#logoS" x="631" y="413" width="27" height="27"/><text x="613.5" y="452" font-family="Liberation Sans" font-weight="bold" font-size="8" fill="#f4cc3a" textLength="62" lengthAdjust="spacingAndGlyphs">THE GRAPHIC OWL</text><text x="614" y="456.5" font-family="Liberation Sans" font-size="3" fill="#9fb8d8" textLength="61" lengthAdjust="spacing">YOUR PERFECT DESTINATION</text><rect x="364.5" y="396.5" width="364.5" height="175.5" fill="none" stroke="#8d9fb8" stroke-width="1"/><rect x="361.5" y="393.5" width="5" height="5" fill="#fff" stroke="#8d9fb8" stroke-width="1.2"/><rect x="543.5" y="393.5" width="5" height="5" fill="#fff" stroke="#8d9fb8" stroke-width="1.2"/><rect x="726.5" y="393.5" width="5" height="5" fill="#fff" stroke="#8d9fb8" stroke-width="1.2"/><rect x="361.5" y="482.5" width="5" height="5" fill="#fff" stroke="#8d9fb8" stroke-width="1.2"/><rect x="726.5" y="482.5" width="5" height="5" fill="#fff" stroke="#8d9fb8" stroke-width="1.2"/><rect x="361.5" y="569.5" width="5" height="5" fill="#fff" stroke="#8d9fb8" stroke-width="1.2"/><rect x="543.5" y="569.5" width="5" height="5" fill="#fff" stroke="#8d9fb8" stroke-width="1.2"/><rect x="726.5" y="569.5" width="5" height="5" fill="#fff" stroke="#8d9fb8" stroke-width="1.2"/><path d="M816 418 L765 544" stroke="#2f8dd6" stroke-width="5" stroke-linecap="butt"/><path d="M818.2 419 L767 545" stroke="#1d6db0" stroke-width="1.3"/><path d="M816.5 417 L812 428" stroke="#f2e3a0" stroke-width="5.3"/><path d="M812.5 427 L811 431" stroke="#2a6aa0" stroke-width="5.3"/><path d="M770 533 L764.5 546 L767 534 Z" fill="#e0c9a0" stroke="#c8b088" stroke-width="1.5"/><path d="M838.5 427 L797 520" stroke="#173f8c" stroke-width="9" stroke-linecap="round"/><path d="M834 427 L812 478" stroke="#e8edf5" stroke-width="1.5"/><path d="M818 470 L823 473" stroke="#e0e6f0" stroke-width="2"/><path d="M798 507 L806 511" stroke="#e8ecf3" stroke-width="2"/><path d="M799 515 L792 530" stroke="#151515" stroke-width="8.5"/><path d="M792 530 L786 548" stroke="#c9ccd2" stroke-width="3.5"/><g transform="translate(849 508) rotate(-35)"><rect x="-19" y="-10" width="38" height="20" rx="2" fill="#1f57b0"/><rect x="-19" y="4" width="38" height="8" rx="1.5" fill="#dfe3ea"/><rect x="-19" y="-10" width="10" height="22" fill="#e9ecf1"/><rect x="-6" y="-6" width="5" height="5" fill="#f2c31f"/></g><rect x="887.5" y="419" width="32.5" height="23" rx="2.5" fill="#094f8b"/><rect x="891.7" y="447" width="25.3" height="21" fill="#a9adb3"/><rect x="895" y="450" width="6" height="9" fill="#dfe2e6"/><rect x="906" y="450" width="6" height="9" fill="#dfe2e6"/><rect x="897" y="453" width="2" height="4" fill="#777"/><rect x="908" y="453" width="2" height="4" fill="#777"/><rect x="887.5" y="467" width="32.5" height="96" rx="2.5" fill="#094f8b"/><text transform="translate(905 539.5) rotate(-90)" font-family="Liberation Sans" font-weight="bold" font-size="8" fill="#f6c628" textLength="62" lengthAdjust="spacingAndGlyphs">THE GRAPHIC OWL</text><rect x="907.5" y="482" width="1" height="54" fill="#8fb0d8" opacity="0.7"/><use href="#logoS" x="898" y="541" width="11" height="11"/><path d="M994.5 448.5 C988 436 986 426 994 421 C1004 416 1030 418 1040 414 C1050 409 1048 392 1036 387 C1020 381 970 382 945 384 C932 386 926 398 932 406 C940 414 955 410 966 405 C978 399 985 391 996 386 C1002 384 1010 383 1022 383.5" stroke="#151515" stroke-width="4.6" fill="none" stroke-linecap="butt"/><rect x="992.5" y="444.5" width="3" height="2" fill="#eee" transform="rotate(-30 994 445.5)"/><path d="M989 456 Q994 452 999 456 L998 462 Q994 466 990 462 Z" fill="#c9ccd1"/><rect x="989" y="466" width="10" height="16" rx="2.5" fill="#c4c7cc"/><rect x="925" y="473" width="136" height="90" rx="7" fill="#d9dbe0"/><rect x="929" y="477" width="128" height="82" rx="5" fill="#ffffff"/><path d="M929 502.5 V482 A5 5 0 0 1 934 477 H1052 A5 5 0 0 1 1057 482 V502.5 Z" fill="#094f8b"/><rect x="982.6" y="481.6" width="23" height="3.2" rx="1.5" fill="#c7d9ee"/><rect x="988" y="470" width="12" height="13" rx="2" fill="#c4c7cc"/><use href="#logoS" x="955" y="487" width="11" height="11"/><text x="969" y="495" font-family="Liberation Sans" font-weight="bold" font-size="7" fill="#f6c628" textLength="62" lengthAdjust="spacingAndGlyphs">THE GRAPHIC OWL</text><rect x="975" y="497.5" width="50" height="1" fill="#7fa6d6"/><circle cx="951.5" cy="524.5" r="16" fill="#ffffff" stroke="#e4e4e4" stroke-width="1"/><path d="M940 539 C940 531 946 529 951.5 529 C957 529 963 531 963 539 Z" fill="#111"/><ellipse cx="951.5" cy="520" rx="5" ry="6.5" fill="#111"/><path d="M949 529 L951.5 535 L954 529 Z" fill="#fff"/><text x="987" y="515.5" font-family="Liberation Sans" font-weight="bold" font-size="4.5" fill="#222" textLength="52" lengthAdjust="spacingAndGlyphs">Muhammad Mamun Name</text><text x="993.5" y="522.5" font-family="Liberation Sans" font-weight="bold" font-size="5.5" fill="#222" textLength="39" lengthAdjust="spacingAndGlyphs">Graphic Designer</text></svg>
<svg style="left:1154px;top:128px" width="36" height="36" viewBox="0 0 36 36"><use href="#logoS" x="0" y="0" width="36" height="36"/></svg>
<svg style="left:1166px;top:203px" width="80" height="16" viewBox="1166 203 80 16"><use href="#logoS" x="1167" y="204" width="12" height="12"/><text x="1182" y="212" font-family="Liberation Sans" font-weight="bold" font-size="8" fill="#f2d23a" stroke="#f2d23a" stroke-width="0.4" textLength="61" lengthAdjust="spacingAndGlyphs">THE GRAPHIC OWL</text><rect x="1190" y="214.5" width="44" height="1" fill="#9a9aa8" opacity="0.6"/></svg>
<svg style="left:660px;top:662px" width="30" height="34" viewBox="660 662 30 34"><path d="M668 669 L668.5 689 L672.8 685 L681.5 682.8 Z" fill="#000" stroke="#b8b8b8" stroke-width="1.4" stroke-linejoin="round"/></svg></body></html>
